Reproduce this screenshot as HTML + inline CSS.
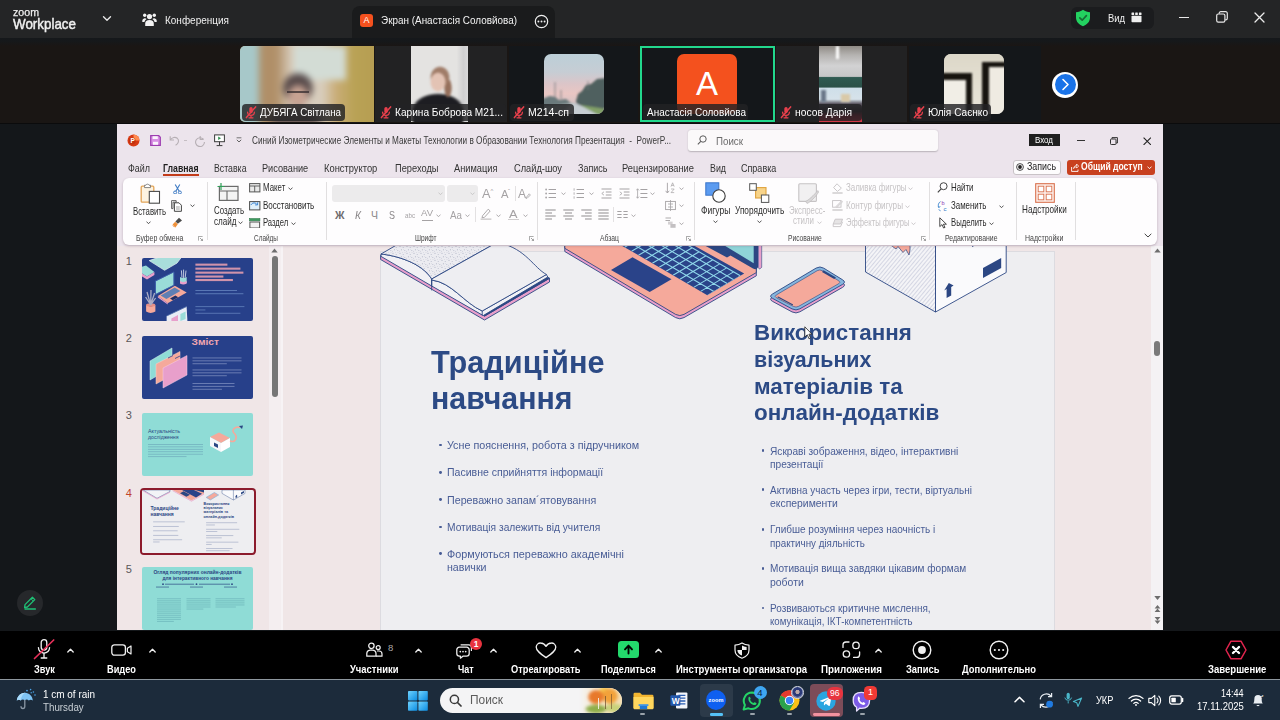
<!DOCTYPE html>
<html lang="ru">
<head>
<meta charset="utf-8">
<title>Zoom</title>
<style>
*{box-sizing:border-box;margin:0;padding:0}
html,body{width:1280px;height:720px;overflow:hidden;background:#14171a;font-family:"Liberation Sans",sans-serif;}
.abs{position:absolute}
.sx{display:inline-block;white-space:nowrap;transform-origin:0 50%}
#root{position:relative;width:1280px;height:720px;overflow:hidden;background:#14171a}
/* ---------- zoom top bar ---------- */
#topbar{left:0;top:0;width:1280px;height:37.5px;background:#242526}
#topbar .t{position:absolute;color:#f0f0f0;white-space:nowrap}
#tab{left:352px;top:6px;width:203px;height:32px;background:#1a1b1c;border-radius:8px 8px 0 0}
/* ---------- video strip ---------- */
#strip{left:0;top:38px;width:1280px;height:86px;background:#1a1614}
#stripband{left:0;top:37.5px;width:1280px;height:8px;background:linear-gradient(#15181b 0,#16181a 45%,#1a1614 100%)}
.tile{position:absolute;top:46px;height:76px;overflow:hidden}
.nm{position:absolute;bottom:1px;height:17px;background:rgba(34,34,36,.82);color:#fff;font-size:11px;line-height:17px;border-radius:4px;white-space:nowrap;padding:0 5px 0 18px}
.nm.nomic{padding-left:4px}
.mic{position:absolute;left:3px;top:2px;width:12px;height:13px}
/* ---------- shared screen ---------- */
#share{left:117px;top:124px;width:1046px;height:506px;background:#f0e4e8;overflow:hidden}
.rt{position:absolute;white-space:nowrap;color:#2b2b2b;font-size:10.5px;line-height:12px}
.rl{position:absolute;white-space:nowrap;color:#444;font-size:8.5px;line-height:10px}
.vs{position:absolute;top:182px;width:1px;height:58px;background:#e1dfe0}
/* ---------- zoom toolbar ---------- */
#zbar{left:0;top:630.5px;width:1280px;height:50px;background:#000}
.zl{position:absolute;top:33px;color:#fff;font-size:11px;font-weight:bold;white-space:nowrap;transform:translateX(-50%);line-height:12px}
/* ---------- taskbar ---------- */
#task{left:0;top:679.3px;width:1280px;height:41px;background:#1c2b3b;border-top:1.2px solid #8e979e}
</style>
</head>
<body>
<div id="root">

<!-- ZOOM TOP BAR -->
<div id="topbar" class="abs">
  <div class="t" style="left:13px;top:7.2px;font-size:10.5px;line-height:10px;-webkit-text-stroke:.25px #f0f0f0"><span class="sx" style="transform:scaleX(1.0122)">zoom</span></div>
  <div class="t" style="left:13px;top:15.8px;font-size:14.5px;line-height:16px;-webkit-text-stroke:.45px #f0f0f0"><span class="sx" style="transform:scaleX(0.9233)">Workplace</span></div>
  <svg class="abs" style="left:102px;top:15px" width="10" height="8" viewBox="0 0 10 8"><path d="M1.5 1.8 L5 5.3 L8.5 1.8" fill="none" stroke="#e8e8e8" stroke-width="1.4" stroke-linecap="round" stroke-linejoin="round"/></svg>
  <svg class="abs" style="left:142px;top:12px" width="15" height="15" viewBox="0 0 15 15"><g fill="#f2f2f2"><circle cx="7.5" cy="4.6" r="2.6"/><circle cx="2.7" cy="3.2" r="1.7"/><circle cx="12.3" cy="3.2" r="1.7"/><path d="M3.2 14 v-2.3 a4.3 3.6 0 0 1 8.6 0 V14 z"/><path d="M0.3 10 v-1.6 a2.5 2.3 0 0 1 4.3 -1.3 a5 5 0 0 0 -2.2 2.9 z"/><path d="M14.7 10 v-1.6 a2.5 2.3 0 0 0 -4.3 -1.3 a5 5 0 0 1 2.2 2.9 z"/></g></svg>
  <div class="t" style="left:165px;top:13px;font-size:11.5px;line-height:14px"><span class="sx" style="transform:scaleX(0.8685)">Конференция</span></div>
  <!-- right cluster -->
  <div class="abs" style="left:1071px;top:7px;width:83px;height:22px;background:#1b1c1e;border-radius:6px"></div>
  <svg class="abs" style="left:1075px;top:9px" width="16" height="18" viewBox="0 0 16 18"><path d="M8 0.8 C5.8 2.4 3.5 3 1 3.2 V8.5 C1 12.6 3.8 15.6 8 17.2 C12.2 15.6 15 12.6 15 8.5 V3.2 C12.5 3 10.2 2.4 8 0.8 z" fill="#23d160"/><path d="M4.8 8.8 L7.2 11.2 L11.4 6.6" fill="none" stroke="#176b35" stroke-width="1.7" stroke-linecap="round" stroke-linejoin="round"/></svg>
  <div class="t" style="left:1108px;top:11px;font-size:11.5px;line-height:14px"><span class="sx" style="transform:scaleX(0.8168)">Вид</span></div>
  <svg class="abs" style="left:1131px;top:12px" width="11" height="11" viewBox="0 0 11 11"><g fill="#efefef"><rect x="0.5" y="0.5" width="2.6" height="2.4" rx=".5"/><rect x="4.2" y="0.5" width="2.6" height="2.4" rx=".5"/><rect x="7.9" y="0.5" width="2.6" height="2.4" rx=".5"/><rect x="0.5" y="3.8" width="10" height="6.4" rx=".8"/></g></svg>
  <div class="abs" style="left:1179px;top:17px;width:10px;height:1.4px;background:#e8e8e8"></div>
  <svg class="abs" style="left:1216px;top:11px" width="12" height="12" viewBox="0 0 12 12"><rect x="0.7" y="3" width="8.2" height="8.2" rx="1.6" fill="none" stroke="#e8e8e8" stroke-width="1.2"/><path d="M3.2 2.8 V2.3 A1.6 1.6 0 0 1 4.8 0.7 H9.6 A1.7 1.7 0 0 1 11.3 2.4 V7.2 A1.6 1.6 0 0 1 9.7 8.8 H9.2" fill="none" stroke="#e8e8e8" stroke-width="1.2"/></svg>
  <svg class="abs" style="left:1254px;top:12px" width="11" height="11" viewBox="0 0 11 11"><path d="M1 1 L10 10 M10 1 L1 10" stroke="#ececec" stroke-width="1.3" stroke-linecap="round"/></svg>
</div>

<!-- VIDEO STRIP -->
<div id="strip" class="abs"></div>
<div id="stripband" class="abs"></div>
<!-- tile 1 -->
<div class="tile" style="left:240px;width:133.5px;border-radius:5px 0 0 5px;background:#b9a274">
  <div class="abs" style="left:-8px;top:-8px;width:160px;height:100px;filter:blur(3.2px);
    background:
     radial-gradient(ellipse 11px 12px at 66px 58px,#c7a292 0 80%,transparent 100%),
     radial-gradient(ellipse 16px 16px at 66px 50px,#574a4a 0 82%,transparent 100%),
     radial-gradient(ellipse 30px 14px at 64px 82px,#6d5d5a 0 70%,transparent 100%),
     linear-gradient(#d3dcd5,#d3dcd5) 62px 8px/52px 34px no-repeat,
     linear-gradient(90deg,#a7c8c9 0 24px,#b08f68 30px 44px,#d8cdbd 60px 90px,#c9ad78 104px,#b9a255 122px,#b39a50 160px)"></div>
  <div class="abs" style="left:47px;top:45px;width:22px;height:2px;background:#3f3435;opacity:.8;filter:blur(.6px)"></div>
  <div class="nm" style="left:2px;width:103px"><svg class="mic" viewBox="0 0 12 13"><g fill="none" stroke="#e8404c" stroke-width="1.25" stroke-linecap="round"><rect x="4.3" y="1" width="3.4" height="6.2" rx="1.7" fill="#e8404c" stroke="none"/><path d="M2.6 6 a3.4 3.4 0 0 0 6.8 0"/><path d="M6 9.6 V11.6 M4 11.8 H8"/><path d="M10.6 0.9 L1.4 11.6" stroke-width="1.5"/></g></svg><span class="sx" style="transform:scaleX(0.8903)">ДУБЯГА Світлана</span></div>
</div>
<!-- tile 2 -->
<div class="tile" style="left:375px;width:132px;background:#222223">
  <div class="abs" style="left:36px;top:0;width:57px;height:76px;background:linear-gradient(90deg,#e4e3e1 0 80%,#cfcfd0 92%,#d9d9da);overflow:hidden">
    <div class="abs" style="left:0;top:0;width:66px;height:84px;filter:blur(1.3px);
      background:
       radial-gradient(ellipse 8px 10px at 27px 36px,#e3c3b4 0 85%,transparent 100%),
       radial-gradient(ellipse 10px 11px at 29px 31px,#a07c68 0 85%,transparent 100%),
       radial-gradient(ellipse 4px 10px at 37px 42px,#96705c 0 80%,transparent 100%),
       radial-gradient(ellipse 26px 16px at 27px 63px,#1d1d22 0 88%,transparent 100%),
       linear-gradient(#1d1d22,#1d1d22) 2px 62px/50px 20px no-repeat"></div>
  </div>
  <div class="nm" style="left:2px;width:129px"><svg class="mic" viewBox="0 0 12 13"><g fill="none" stroke="#e8404c" stroke-width="1.25" stroke-linecap="round"><rect x="4.3" y="1" width="3.4" height="6.2" rx="1.7" fill="#e8404c" stroke="none"/><path d="M2.6 6 a3.4 3.4 0 0 0 6.8 0"/><path d="M6 9.6 V11.6 M4 11.8 H8"/><path d="M10.6 0.9 L1.4 11.6" stroke-width="1.5"/></g></svg><span class="sx" style="transform:scaleX(0.9201)">Карина Боброва М21...</span></div>
</div>
<!-- tile 3 -->
<div class="tile" style="left:509px;width:129px;background:#14171a">
  <svg class="abs" style="left:35px;top:8px;border-radius:7px" width="60" height="60" viewBox="0 0 60 60">
    <defs><linearGradient id="sky" x1="0" y1="0" x2="0" y2="1"><stop offset="0" stop-color="#bccfd8"/><stop offset=".3" stop-color="#c6cdd4"/><stop offset=".5" stop-color="#dcc5c8"/><stop offset=".66" stop-color="#e9c6c3"/><stop offset=".8" stop-color="#d9c3c4"/><stop offset="1" stop-color="#c2c9cf"/></linearGradient><filter id="b3"><feGaussianBlur stdDeviation="1.1"/></filter></defs>
    <rect width="60" height="60" fill="url(#sky)"/>
    <g filter="url(#b3)">
      <path d="M62 24L53 25L47 30L42 31L38 37L34 40L32 47L33 51L62 58z" fill="#50605f"/>
      <path d="M-2 45L6 42L11 43L15 46L22 45L27 49L-2 55z" fill="#6b797b"/>
      <path d="M-2 53L28 49L33 50L58 62H-2z" fill="#9aa6a8"/>
      <path d="M28 49.5L33.5 50L57 62H14z" fill="#c6cdd3"/>
      <path d="M36 51L62 55V62H56z" fill="#82a067"/>
      <path d="M11 28V45M44 27V36M17 36V45" stroke="#6d7478" stroke-width=".8"/>
    </g>
  </svg>
  <div class="nm" style="left:1px;width:64px"><svg class="mic" viewBox="0 0 12 13"><g fill="none" stroke="#e8404c" stroke-width="1.25" stroke-linecap="round"><rect x="4.3" y="1" width="3.4" height="6.2" rx="1.7" fill="#e8404c" stroke="none"/><path d="M2.6 6 a3.4 3.4 0 0 0 6.8 0"/><path d="M6 9.6 V11.6 M4 11.8 H8"/><path d="M10.6 0.9 L1.4 11.6" stroke-width="1.5"/></g></svg><span class="sx" style="transform:scaleX(0.9615)">М214-сп</span></div>
</div>
<!-- tile 4 active -->
<div class="tile" style="left:639.5px;width:135px;background:#14171a;border:2px solid #22d88d">
  <div class="abs" style="left:35.5px;top:6px;width:60px;height:60px;border-radius:7px;background:#f4511e;color:#fff;font-size:33px;line-height:60px;text-align:center">A</div>
  <div class="nm nomic" style="left:1.5px;width:105px;bottom:-1px"><span class="sx" style="transform:scaleX(0.9045)">Анастасія Соловйова</span></div>
</div>
<!-- tile 5 -->
<div class="tile" style="left:776px;width:131px;background:#222223">
  <div class="abs" style="left:42.5px;top:0;width:43px;height:76px;overflow:hidden;background:linear-gradient(#8f8a85 0,#b5b3b1 12%,#d2d2d3 26%,#c6c6c7 40%,#2f5a51 41.5%,#2c5148 54%,#cfdfe9 55.5%,#d6e2ea 70%,#5a5560 76%,#30222b 86%,#a21f33 92%,#d83a4a 100%)">
    <div class="abs" style="left:17px;top:0;width:3px;height:13px;background:#fff;filter:blur(1px)"></div>
    <div class="abs" style="left:22px;top:48px;width:9px;height:8px;background:#d9c9a8;filter:blur(1px)"></div>
    <div class="abs" style="left:2px;top:44px;width:5px;height:12px;background:#6a7788;filter:blur(1px)"></div>
  </div>
  <div class="nm" style="left:1px;width:85px"><svg class="mic" viewBox="0 0 12 13"><g fill="none" stroke="#e8404c" stroke-width="1.25" stroke-linecap="round"><rect x="4.3" y="1" width="3.4" height="6.2" rx="1.7" fill="#e8404c" stroke="none"/><path d="M2.6 6 a3.4 3.4 0 0 0 6.8 0"/><path d="M6 9.6 V11.6 M4 11.8 H8"/><path d="M10.6 0.9 L1.4 11.6" stroke-width="1.5"/></g></svg><span class="sx" style="transform:scaleX(0.9356)">носов Дарія</span></div>
</div>
<!-- tile 6 -->
<div class="tile" style="left:908.5px;width:132px;background:#14171a">
  <div class="abs" style="left:35px;top:8px;width:60px;height:60px;border-radius:7px;overflow:hidden;background:#e6e1d3">
    <div class="abs" style="left:-3px;top:-3px;width:68px;height:68px;filter:blur(1.2px);
      background:
       linear-gradient(#efebe2,#efebe2) 48px 16px/20px 56px no-repeat,
       linear-gradient(#17140f,#17140f) 41px 11px/30px 60px no-repeat,
       linear-gradient(#f1eee6,#f1eee6) 0 29px/25px 40px no-repeat,
       linear-gradient(#17140f,#17140f) 0 22px/31px 50px no-repeat,
       linear-gradient(#dcd7c8,#ebe7db)"></div>
  </div>
  <div class="nm" style="left:1px;width:81px"><svg class="mic" viewBox="0 0 12 13"><g fill="none" stroke="#e8404c" stroke-width="1.25" stroke-linecap="round"><rect x="4.3" y="1" width="3.4" height="6.2" rx="1.7" fill="#e8404c" stroke="none"/><path d="M2.6 6 a3.4 3.4 0 0 0 6.8 0"/><path d="M6 9.6 V11.6 M4 11.8 H8"/><path d="M10.6 0.9 L1.4 11.6" stroke-width="1.5"/></g></svg><span class="sx" style="transform:scaleX(0.9171)">Юлія Саєнко</span></div>
</div>
<!-- next button -->
<div class="abs" style="left:1052px;top:71.5px;width:26px;height:26px;border-radius:50%;background:#fff"></div>
<div class="abs" style="left:1054.5px;top:74px;width:21px;height:21px;border-radius:50%;background:#1a73e8"></div>
<svg class="abs" style="left:1060px;top:78px" width="10" height="13" viewBox="0 0 10 13"><path d="M3 1.5 L8 6.5 L3 11.5" fill="none" stroke="#fff" stroke-width="1.6" stroke-linecap="round" stroke-linejoin="round"/></svg>

<div id="tab" class="abs">
  <div class="abs" style="left:8px;top:8px;width:13px;height:13px;background:#f4511e;border-radius:3px;color:#fff;font-size:9px;line-height:13px;text-align:center">A</div>
  <div class="abs" style="left:29px;top:7px;color:#f2f2f2;font-size:11.5px;line-height:14px;white-space:nowrap"><span class="sx" style="transform:scaleX(0.8623)">Экран (Анастасія Соловйова)</span></div>
  <svg class="abs" style="left:182px;top:7.5px" width="15" height="15" viewBox="0 0 15 15"><circle cx="7.5" cy="7.5" r="6.2" fill="none" stroke="#f0f0f0" stroke-width="1.2"/><circle cx="4.4" cy="7.5" r=".95" fill="#f0f0f0"/><circle cx="7.5" cy="7.5" r=".95" fill="#f0f0f0"/><circle cx="10.6" cy="7.5" r=".95" fill="#f0f0f0"/></svg>
</div>

<div class="abs" id="blk" style="left:0;top:122.7px;width:1280px;height:1.3px;background:#0b0b0c"></div>
<!-- SHARED SCREEN -->
<div id="share" class="abs"><div class="abs" id="pg" style="left:-117px;top:-124px;width:1280px;height:720px">
<!--SLIDE-->
<div class="abs" style="left:117px;top:244px;width:1046px;height:390px;background:#f0e6e7"></div>
<div class="abs" style="left:269px;top:245px;width:12px;height:390px;background:#f4eef0"></div>
<div class="abs" style="left:281px;top:245px;width:2px;height:390px;background:#f7f3f5"></div>
<div class="abs" style="left:271.5px;top:256px;width:6px;height:141px;background:#767676;border-radius:3px"></div>
<svg class="abs" style="left:271px;top:247.5px" width="7" height="5" viewBox="0 0 7 5"><path d="M.3 4.6L3.5 .6L6.7 4.6z" fill="#6d6d6d"/></svg>
<div class="abs" style="left:379.5px;top:251px;width:675.5px;height:390px;background:#eeeef1;border:1px solid #dcdbe0"></div>
<div class="abs" style="left:1151px;top:245px;width:12px;height:390px;background:#f4f2f4"></div>
<svg class="abs" style="left:1153.5px;top:247.5px" width="7" height="5" viewBox="0 0 7 5"><path d="M.3 4.6L3.5 .6L6.7 4.6z" fill="#6d6d6d"/></svg>
<div class="abs" style="left:1154px;top:341px;width:6px;height:15px;background:#7a7a7a;border-radius:3px"></div>
<svg class="abs" style="left:1153.5px;top:595px" width="7" height="30" viewBox="0 0 7 30"><g fill="#6d6d6d"><path d="M.3 1L3.5 5L6.7 1z"/><path d="M.6 13.5L3.5 10L6.4 13.5zM.6 17L3.5 13.6L6.4 17z"/><path d="M.6 22L3.5 25.5L6.4 22zM.6 25.5L3.5 29L6.4 25.5z"/></g></svg>
<svg class="abs" style="left:0;top:0" width="1280" height="720" viewBox="0 0 1280 720"><defs>
<pattern id="stip" width="7" height="7" patternUnits="userSpaceOnUse"><rect width="7" height="7" fill="#ececf1"/><circle cx="1" cy="1.2" r=".55" fill="#a9adbf"/><circle cx="4.2" cy="2.6" r=".5" fill="#b3b7c8"/><circle cx="2.4" cy="4.8" r=".55" fill="#a9adbf"/><circle cx="5.8" cy="5.6" r=".5" fill="#b3b7c8"/><circle cx="6" cy=".6" r=".45" fill="#bcbfce"/><circle cx=".6" cy="6.2" r=".45" fill="#bcbfce"/><circle cx="3.4" cy=".4" r=".4" fill="#c3c6d3"/><circle cx="4.6" cy="4.6" r=".4" fill="#c3c6d3"/></pattern>
<pattern id="hat" width="3" height="3" patternUnits="userSpaceOnUse" patternTransform="rotate(-50)"><rect width="3" height="3" fill="#f4f4f7"/><path d="M0 1.5H3" stroke="#c5c9da" stroke-width=".7"/></pattern>
<clipPath id="kb"><path d="M620.5 245L631.6 251.2L707.3 295.3L744.2 273.5L693 245z"/></clipPath>
<clipPath id="below"><rect x="117" y="245" width="1046" height="400"/></clipPath>
</defs>
<g clip-path="url(#below)">
<path d="M380.6 255.5L484.5 316L549.5 278.3V282L484.5 320L380.6 259.5z" fill="#e89fcb" stroke="#2c4783" stroke-width=".9" stroke-linejoin="round"/>
<path d="M483.6 314.2L547.8 277L549.5 278.3L484.5 316.2z" fill="#2c4783" stroke="#2c4783" stroke-width=".8"/>
<path d="M381 254C395 255.5 421 262 431.7 279V286L381 256.4z" fill="#f1f1f5" stroke="#2c4783" stroke-width=".9" stroke-linejoin="round"/>
<path d="M381 254L400 243H496L431.7 279C421 262 395 255.5 381 254z" fill="url(#stip)" stroke="#2c4783" stroke-width=".9" stroke-linejoin="round"/>
<path d="M431.7 280C452 282.5 464 303 482.2 311L546.3 274.5L547.8 277L483.2 315.6L431.7 286z" fill="#f1f1f5" stroke="#2c4783" stroke-width=".9" stroke-linejoin="round"/>
<path d="M431.7 279L496 243H500C526 249 534 268 546.5 274.5L482.2 311C464 303 452 282.5 431.7 280z" fill="#eeeef2" stroke="#2c4783" stroke-width=".9" stroke-linejoin="round"/>
<path d="M482.2 311V315.4M431.7 279V290.4" stroke="#2c4783" stroke-width=".9"/>
<path d="M564.8 251.5V243H756.3V275.8L684 317.6Q679.8 320 675.6 317.6z" fill="#e89fcb" stroke="#2c4783" stroke-width=".9" stroke-linejoin="round"/>
<path d="M564.8 248.3V240H756.3V272.6L684 314.4Q679.8 316.8 675.6 314.4z" fill="#f5a99b" stroke="#2c4783" stroke-width=".9" stroke-linejoin="round"/>
<path d="M611 270L632.5 257.2L671.5 279.2L649.7 291.9z" fill="#2a4389"/>
<g clip-path="url(#kb)"><rect x="600" y="240" width="160" height="60" fill="#2a4389"/>
<path d="M578.2 212.3L713.9 291.4M584.8 208.4L720.5 287.5M591.4 204.6L727.1 283.6M598.0 200.6L733.7 279.7M604.6 196.8L740.3 275.8M590.2 227.1L623.2 207.6M597.1 231.1L630.1 211.6M604.0 235.1L637.0 215.6M610.9 239.1L643.9 219.6M617.8 243.2L650.8 223.7M624.7 247.2L657.7 227.7M631.6 251.2L664.6 231.7M638.5 255.2L671.5 235.7M645.4 259.2L678.4 239.7M652.3 263.3L685.3 243.8M659.2 267.3L692.2 247.8M666.1 271.3L699.1 251.8M673.0 275.3L706.0 255.8M679.9 279.3L712.9 259.8M686.8 283.4L719.8 263.9M693.7 287.4L726.7 267.9M700.6 291.4L733.6 271.9M707.5 295.4L740.5 275.9" stroke="#8fd6ea" stroke-width="1.1" fill="none"/>
</g>
<path d="M703.8 243V245L727 257.5L730.5 255.5L753 268.6Q758.3 270.6 758.3 265V243z" fill="#2c4783"/>
<path d="M723.6 243V245L753.7 263.2V243z" fill="#8fd4d8"/>
<path d="M758.3 243V267.4Q759.2 270.4 761.7 267.2V243z" fill="#e89fcb" stroke="#2c4783" stroke-width=".6"/>
<path d="M772.6 301.4Q768.6 299.3 772.5 297.0L816.1 271.1Q820.0 268.8 823.8 271.2L842.6 282.8Q846.4 285.2 842.5 287.4L799.9 311.8Q796.0 314.0 792.0 311.9z" fill="#e89fcb" stroke="#2c4783" stroke-width=".9"/>
<path d="M772.6 298.4Q768.6 296.3 772.5 294.0L816.1 268.1Q820.0 265.8 823.8 268.2L842.6 279.8Q846.4 282.2 842.5 284.4L799.9 308.8Q796.0 311.0 792.0 308.9z" fill="#86b6dd" stroke="#2c4783" stroke-width=".9"/>
<path d="M776.5 297.8Q773.8 296.4 776.4 294.9L817.2 270.7Q819.8 269.2 822.4 270.8L838.6 280.7Q841.2 282.3 838.6 283.8L798.7 306.3Q796.1 307.8 793.4 306.4z" fill="#f5a99b" stroke="#2c4783" stroke-width=".6"/>
<path d="M778 297L792.5 304.7" stroke="#2c4783" stroke-width="1.1" stroke-linecap="round"/>
<path d="M823.5 270.3L836 277.6L834.2 279L822 272z" fill="#2c4783"/>
<path d="M865.5 243V272L935.5 312V243z" fill="url(#hat)" stroke="#2c4783" stroke-width=".9" stroke-linejoin="round"/>
<path d="M935.5 243V312L1006.2 272.5V243z" fill="#fafafc" stroke="#2c4783" stroke-width=".9" stroke-linejoin="round"/>
<path d="M983 268L1001.2 258V268L983 278z" fill="#2c4783"/>
<path d="M944.2 290.4L948.8 283L953.6 285.6L951.2 287V295.4L946.6 298V289z" fill="#2c4783"/>
<path d="M892.5 243V246.5L896 249L898 246.5L903 252.5L906 249.5L909 255L910 250V243z" fill="#f5a99b" stroke="#2c4783" stroke-width=".7"/>
<path d="M972 246.5L979 243" stroke="#2c4783" stroke-width="1"/>
</g></svg>
<div class="abs" style="left:430.5px;top:344.5px;font-size:30.6px;line-height:35.19px;color:#2c4a85;white-space:nowrap;font-weight:bold;"><span class="sx" style="transform:scaleX(1.0025)">Традиційне</span></div>
<div class="abs" style="left:430.5px;top:380.6px;font-size:30.6px;line-height:35.19px;color:#2c4a85;white-space:nowrap;font-weight:bold;"><span class="sx" style="transform:scaleX(0.9914)">навчання</span></div>
<div class="abs" style="left:754px;top:319.1px;font-size:22.8px;line-height:26.22px;color:#2c4a85;white-space:nowrap;font-weight:bold;"><span class="sx" style="transform:scaleX(0.9805)">Використання</span></div>
<div class="abs" style="left:754px;top:345.9px;font-size:22.8px;line-height:26.22px;color:#2c4a85;white-space:nowrap;font-weight:bold;"><span class="sx" style="transform:scaleX(0.9381)">візуальних</span></div>
<div class="abs" style="left:754px;top:372.5px;font-size:22.8px;line-height:26.22px;color:#2c4a85;white-space:nowrap;font-weight:bold;"><span class="sx" style="transform:scaleX(0.9852)">матеріалів та</span></div>
<div class="abs" style="left:754px;top:399.0px;font-size:22.8px;line-height:26.22px;color:#2c4a85;white-space:nowrap;font-weight:bold;"><span class="sx" style="transform:scaleX(0.9840)">онлайн-додатків</span></div>
<div class="abs" style="left:447.2px;top:438.8px;font-size:10.6px;line-height:12.19px;color:#485c95;white-space:nowrap;"><span class="sx" style="transform:scaleX(1.0160)">Усне пояснення, робота з підручником</span></div><div class="abs" style="left:438.90000000000003px;top:443.5px;width:2.8px;height:2.8px;border-radius:50%;background:#485c95"></div>
<div class="abs" style="left:447.2px;top:466.3px;font-size:10.6px;line-height:12.19px;color:#485c95;white-space:nowrap;"><span class="sx" style="transform:scaleX(0.9942)">Пасивне сприйняття інформації</span></div><div class="abs" style="left:438.90000000000003px;top:471.0px;width:2.8px;height:2.8px;border-radius:50%;background:#485c95"></div>
<div class="abs" style="left:447.2px;top:493.5px;font-size:10.6px;line-height:12.19px;color:#485c95;white-space:nowrap;"><span class="sx" style="transform:scaleX(1.0112)">Переважно запам´ятовування</span></div><div class="abs" style="left:438.90000000000003px;top:498.2px;width:2.8px;height:2.8px;border-radius:50%;background:#485c95"></div>
<div class="abs" style="left:447.2px;top:520.8px;font-size:10.6px;line-height:12.19px;color:#485c95;white-space:nowrap;"><span class="sx" style="transform:scaleX(0.9645)">Мотивація залежить від учителя</span></div><div class="abs" style="left:438.90000000000003px;top:525.5px;width:2.8px;height:2.8px;border-radius:50%;background:#485c95"></div>
<div class="abs" style="left:447.2px;top:547.7px;font-size:10.6px;line-height:12.19px;color:#485c95;white-space:nowrap;"><span class="sx" style="transform:scaleX(1.0215)">Формуються переважно академічні</span></div><div class="abs" style="left:438.90000000000003px;top:552.4px;width:2.8px;height:2.8px;border-radius:50%;background:#485c95"></div>
<div class="abs" style="left:447.2px;top:561.1px;font-size:10.6px;line-height:12.19px;color:#485c95;white-space:nowrap;"><span class="sx" style="transform:scaleX(1.0036)">навички</span></div>
<div class="abs" style="left:769.6px;top:444.6px;font-size:10.6px;line-height:12.19px;color:#485c95;white-space:nowrap;"><span class="sx" style="transform:scaleX(0.9564)">Яскраві зображення, відео, інтерактивні</span></div><div class="abs" style="left:761.6px;top:449.3px;width:2.8px;height:2.8px;border-radius:50%;background:#485c95"></div>
<div class="abs" style="left:769.6px;top:457.5px;font-size:10.6px;line-height:12.19px;color:#485c95;white-space:nowrap;"><span class="sx" style="transform:scaleX(0.9576)">презентації</span></div>
<div class="abs" style="left:769.6px;top:483.7px;font-size:10.6px;line-height:12.19px;color:#485c95;white-space:nowrap;"><span class="sx" style="transform:scaleX(0.9388)">Активна участь через ігри, тести, віртуальні</span></div><div class="abs" style="left:761.6px;top:488.40000000000003px;width:2.8px;height:2.8px;border-radius:50%;background:#485c95"></div>
<div class="abs" style="left:769.6px;top:497.1px;font-size:10.6px;line-height:12.19px;color:#485c95;white-space:nowrap;"><span class="sx" style="transform:scaleX(0.9814)">експерименти</span></div>
<div class="abs" style="left:769.6px;top:523.3px;font-size:10.6px;line-height:12.19px;color:#485c95;white-space:nowrap;"><span class="sx" style="transform:scaleX(0.9441)">Глибше розуміння через наочність і</span></div><div class="abs" style="left:761.6px;top:528.0px;width:2.8px;height:2.8px;border-radius:50%;background:#485c95"></div>
<div class="abs" style="left:769.6px;top:536.6px;font-size:10.6px;line-height:12.19px;color:#485c95;white-space:nowrap;"><span class="sx" style="transform:scaleX(0.9249)">практичну діяльність</span></div>
<div class="abs" style="left:769.6px;top:562.4px;font-size:10.6px;line-height:12.19px;color:#485c95;white-space:nowrap;"><span class="sx" style="transform:scaleX(0.9498)">Мотивація вища завдяки цікавим формам</span></div><div class="abs" style="left:761.6px;top:567.0999999999999px;width:2.8px;height:2.8px;border-radius:50%;background:#485c95"></div>
<div class="abs" style="left:769.6px;top:575.7px;font-size:10.6px;line-height:12.19px;color:#485c95;white-space:nowrap;"><span class="sx" style="transform:scaleX(0.9860)">роботи</span></div>
<div class="abs" style="left:769.6px;top:602.0px;font-size:10.6px;line-height:12.19px;color:#485c95;white-space:nowrap;"><span class="sx" style="transform:scaleX(0.9413)">Розвиваються критичне мислення,</span></div><div class="abs" style="left:761.6px;top:606.6999999999999px;width:2.8px;height:2.8px;border-radius:50%;background:#485c95"></div>
<div class="abs" style="left:769.6px;top:615.3px;font-size:10.6px;line-height:12.19px;color:#485c95;white-space:nowrap;"><span class="sx" style="transform:scaleX(0.9148)">комунікація, ІКТ-компетентність</span></div>
<svg class="abs" style="left:804px;top:326px" width="9" height="14" viewBox="0 0 9 14"><path d="M.8 .8V11L3.3 8.8L5 12.8L6.6 12.1L4.9 8.2H8z" fill="#fff" stroke="#222" stroke-width=".8" stroke-linejoin="round"/></svg>
<!--/SLIDE-->
<!--THUMBS-->
<div class="abs" style="left:125.8px;top:254.9px;font-size:11px;line-height:12px;color:#5a5658">1</div>
<svg class="abs" style="left:142px;top:258.3px;border-radius:2px;" width="111" height="63" viewBox="0 0 111 63"><rect width="111" height="63" fill="#27408a"/><path d="M7.2 2.6L17.5 -1H39.6L35 5.1L22.6 12.3z" fill="#a9dedb" stroke="#e9f7f6" stroke-width=".7"/><path d="M0 8.7L4 7.5L12.4 14L5 18.5L0 15.5z" fill="#9adcd8"/><path d="M0 15.5L5 18.5L12.4 14V17L5 21.5L0 18.5z" fill="#e89fcb"/><path d="M13.4 23.1L31.9 13.9V27.2L13.4 36.5z" fill="#9adcd8" stroke="#3a5aa8" stroke-width="1"/><path d="M15.9 38L32.9 27.8L44.7 34.4L25.7 45.2z" fill="#f5a99b"/><path d="M18.6 37.6L32.6 29.6L38.4 33L24.4 41z" fill="#5f7fb4"/><path d="M28 40.6L33.4 37.6L36.2 39.2L30.8 42.2z" fill="#1f2f66"/><path d="M15.9 38L25.7 45.2V46.6L15.9 39.4z" fill="#e89fcb"/><path d="M38 19V25Q41.3 27 44.7 25V19Q41.3 21 38 19z" fill="#9adcd8"/><path d="M38 23Q41.3 25 44.7 23V25.4Q41.3 27.4 38 25.4z" fill="#e89fcb"/><path d="M40 19.6L39.4 12.4M41.6 20V11.6M43.2 19.6L44 12.6" stroke="#cfd6e6" stroke-width=".9"/><path d="M4.1 47V53.6Q8.7 56.4 13.4 53.6V47Q8.7 49.8 4.1 47z" fill="#f5a99b"/><ellipse cx="8.7" cy="47" rx="4.6" ry="1.7" fill="#e58f86"/><path d="M8.7 47L5 34M8.7 47L9 32M8.7 47L12.6 35M8.7 47L3.6 39M8.7 47L13.6 40" stroke="#a9abc4" stroke-width="1.3" fill="none"/><path d="M24.6 58L44.6 48.6L45.4 63H24.6z" fill="#e8ecf6"/><path d="M29.4 60.4L36 57V63H29.4z" fill="#e89fcb"/><path d="M38.4 56L43.6 53.4V61L38.4 63z" fill="#9adcd8"/><path d="M24.6 58L44.6 48.6" stroke="#4a6aa8" stroke-width=".8"/><rect x="53.4" y="5.6" width="32" height="2.1" fill="#f5a6b2" opacity=".82"/><rect x="53.4" y="9.6" width="45" height="2.1" fill="#f5a6b2" opacity=".82"/><rect x="53.4" y="13.6" width="48" height="2.1" fill="#f5a6b2" opacity=".82"/><rect x="53.4" y="17.5" width="28" height="2.1" fill="#f5a6b2" opacity=".82"/><rect x="53.4" y="21" width="37.5" height="2.1" fill="#f5a6b2" opacity=".82"/><rect x="53.4" y="32" width="41.6" height=".9" fill="#86a8da" opacity=".6"/><rect x="53.4" y="35.3" width="48" height=".9" fill="#86a8da" opacity=".6"/><rect x="53.4" y="48.2" width="49" height=".9" fill="#86a8da" opacity=".55"/><rect x="53.4" y="51.5" width="10" height=".9" fill="#86a8da" opacity=".55"/><rect x="53.4" y="54.8" width="45" height=".9" fill="#86a8da" opacity=".55"/></svg>
<div class="abs" style="left:125.8px;top:332.4px;font-size:11px;line-height:12px;color:#5a5658">2</div>
<svg class="abs" style="left:142px;top:335.8px;border-radius:2px;" width="111" height="63" viewBox="0 0 111 63"><rect width="111" height="63" fill="#27408a"/><text x="49.5" y="9.4" font-family="Liberation Sans" font-weight="bold" font-size="9.4" fill="#f3a7b0" textLength="27.5" lengthAdjust="spacingAndGlyphs">Зміст</text><path d="M8 25L30 12V31L8 44z" fill="#8fdcd6" stroke="#d9f3f1" stroke-width=".5"/><path d="M14 28L38 15.5V35L14 48z" fill="#f5a99b" stroke="#fbd2cb" stroke-width=".5"/><path d="M21 32L45 19.5V39L21 52z" fill="#e89fcb" stroke="#f6cfe6" stroke-width=".5"/><path d="M33 22.5L38 20" stroke="#27408a" stroke-width=".8"/><path d="M26 22L31 19.5" stroke="#27408a" stroke-width=".8"/><rect x="50.5" y="21.50" width="49.0" height="0.9" fill="#b9c6e6" opacity="0.5"/><rect x="50.5" y="24.40" width="49.0" height="0.9" fill="#b9c6e6" opacity="0.5"/><rect x="50.5" y="27.30" width="34.3" height="0.9" fill="#b9c6e6" opacity="0.5"/><rect x="50.5" y="33.50" width="49.0" height="0.9" fill="#b9c6e6" opacity="0.5"/><rect x="50.5" y="36.40" width="49.0" height="0.9" fill="#b9c6e6" opacity="0.5"/><rect x="50.5" y="39.30" width="34.3" height="0.9" fill="#b9c6e6" opacity="0.5"/><rect x="50.5" y="47.00" width="42.0" height="0.9" fill="#b9c6e6" opacity="0.5"/><rect x="50.5" y="49.90" width="42.0" height="0.9" fill="#b9c6e6" opacity="0.5"/><rect x="50.5" y="52.80" width="29.4" height="0.9" fill="#b9c6e6" opacity="0.5"/></svg>
<div class="abs" style="left:125.8px;top:409.4px;font-size:11px;line-height:12px;color:#5a5658">3</div>
<svg class="abs" style="left:142px;top:412.9px;border-radius:2px;" width="111" height="63" viewBox="0 0 111 63"><rect width="111" height="63" fill="#8fdcd6"/><text x="6" y="19.6" font-family="Liberation Sans" font-size="5.4" fill="#2c4783" textLength="32" lengthAdjust="spacingAndGlyphs">Актуальність</text><text x="6" y="26.2" font-family="Liberation Sans" font-size="5.4" fill="#2c4783" textLength="30.5" lengthAdjust="spacingAndGlyphs">дослідження</text><rect x="6" y="31.00" width="55.0" height="0.8" fill="#4d78a0" opacity="0.42"/><rect x="6" y="33.45" width="55.0" height="0.8" fill="#4d78a0" opacity="0.42"/><rect x="6" y="35.90" width="55.0" height="0.8" fill="#4d78a0" opacity="0.42"/><rect x="6" y="38.35" width="55.0" height="0.8" fill="#4d78a0" opacity="0.42"/><rect x="6" y="40.80" width="55.0" height="0.8" fill="#4d78a0" opacity="0.42"/><rect x="6" y="43.25" width="38.5" height="0.8" fill="#4d78a0" opacity="0.42"/><path d="M68 24L77 19.5L88 25L79 30z" fill="#f5a99b"/><path d="M68 24V33L79 39V30z" fill="#f7f7fa"/><path d="M79 30L88 25V34L79 39z" fill="#fff"/><path d="M72 29.5L76 31.5V35L72 33z" fill="#2c4783"/><path d="M88 28C94 30 96 24 92 20C89 17 93 13 98 14.5" fill="none" stroke="#f5a99b" stroke-width="1.6"/><path d="M97 13L101 12.5L100 16z" fill="#2c4783"/></svg>
<div class="abs" style="left:125.8px;top:486.9px;font-size:11px;line-height:12px;color:#c1432b">4</div>
<div class="abs" style="left:139.5px;top:488.3px;width:116px;height:67px;border:2px solid #8c1b2c;border-radius:4px;background:#eeeef1"></div>
<svg class="abs" style="left:142px;top:490.4px;border-radius:2px;" width="111" height="63" viewBox="0 0 111 63"><rect width="111" height="63" fill="#eeeef1"/><path d="M1 0L15 8.3L28 1.5V0z" fill="#f3f3f7" stroke="#2c4783" stroke-width=".45"/><path d="M1 .8L15 9L28 2.2" fill="none" stroke="#e89fcb" stroke-width=".8"/><path d="M30.5 0L49.5 10.5L62 3.5V0z" fill="#f5a99b"/><path d="M30.5 .6L49.5 11.2L62 4.2" fill="none" stroke="#e89fcb" stroke-width=".7"/><path d="M38 3.2L41.6 1.2L48 4.8L44.4 6.8z" fill="#2c4783"/><path d="M40 0L54 7.4L60 3.8L52 0z" fill="#2a4389"/><path d="M53 0L62 2.5V0z" fill="#2c4783"/><path d="M64.2 7.4L72.4 2.5L76.6 5L68.4 9.9z" fill="#f5a99b" stroke="#86b6dd" stroke-width=".7"/><path d="M80 0V3.4L91.4 10L103 3.4V0z" fill="#fafafc" stroke="#2c4783" stroke-width=".4"/><path d="M91.4 0V10" stroke="#2c4783" stroke-width=".4"/><path d="M99 2.6L102 1V2.8L99 4.4z" fill="#2c4783"/><path d="M93.4 6.4L94.4 4.8L95.2 5.4V7.2L93.8 8z" fill="#2c4783"/><text x="8.4" y="19.8" font-family="Liberation Sans" font-weight="bold" font-size="4.9" fill="#2c4783" textLength="28.5" lengthAdjust="spacingAndGlyphs">Традиційне</text><text x="8.4" y="25.7" font-family="Liberation Sans" font-weight="bold" font-size="4.9" fill="#2c4783" textLength="23.2" lengthAdjust="spacingAndGlyphs">навчання</text><text x="61.5" y="14.60" font-family="Liberation Sans" font-weight="bold" font-size="3.6" fill="#2c4783" textLength="26" lengthAdjust="spacingAndGlyphs">Використання</text><text x="61.5" y="18.97" font-family="Liberation Sans" font-weight="bold" font-size="3.6" fill="#2c4783" textLength="19.3" lengthAdjust="spacingAndGlyphs">візуальних</text><text x="61.5" y="23.34" font-family="Liberation Sans" font-weight="bold" font-size="3.6" fill="#2c4783" textLength="24.5" lengthAdjust="spacingAndGlyphs">матеріалів та</text><text x="61.5" y="27.71" font-family="Liberation Sans" font-weight="bold" font-size="3.6" fill="#2c4783" textLength="30.5" lengthAdjust="spacingAndGlyphs">онлайн-додатків</text><rect x="11.1" y="31.50" width="31.6" height=".75" fill="#41588f" opacity=".38"/><rect x="11.1" y="35.98" width="25.7" height=".75" fill="#41588f" opacity=".38"/><rect x="11.1" y="40.46" width="24.5" height=".75" fill="#41588f" opacity=".38"/><rect x="11.1" y="44.94" width="25.2" height=".75" fill="#41588f" opacity=".38"/><rect x="11.1" y="49.42" width="29" height=".75" fill="#41588f" opacity=".38"/><rect x="11.1" y="51.6" width="6.5" height=".75" fill="#41588f" opacity=".38"/><rect x="64.1" y="32.40" width="31" height=".75" fill="#41588f" opacity=".38"/><rect x="64.1" y="34.60" width="8.8" height=".75" fill="#41588f" opacity=".38"/><rect x="64.1" y="38.85" width="33.2" height=".75" fill="#41588f" opacity=".38"/><rect x="64.1" y="41.05" width="11.2" height=".75" fill="#41588f" opacity=".38"/><rect x="64.1" y="45.30" width="27.2" height=".75" fill="#41588f" opacity=".38"/><rect x="64.1" y="47.50" width="15.6" height=".75" fill="#41588f" opacity=".38"/><rect x="64.1" y="51.75" width="32.3" height=".75" fill="#41588f" opacity=".38"/><rect x="64.1" y="53.95" width="5.6" height=".75" fill="#41588f" opacity=".38"/><rect x="64.1" y="58.20" width="26.4" height=".75" fill="#41588f" opacity=".38"/><rect x="64.1" y="60.40" width="23.5" height=".75" fill="#41588f" opacity=".38"/></svg>
<div class="abs" style="left:125.8px;top:563.4px;font-size:11px;line-height:12px;color:#5a5658">5</div>
<svg class="abs" style="left:142px;top:567.2px;border-radius:2px;" width="111" height="63" viewBox="0 0 111 63"><rect width="111" height="63" fill="#8fdcd6"/><text x="11.5" y="6.8" font-family="Liberation Sans" font-weight="bold" font-size="5.7" fill="#2c4783" textLength="88" lengthAdjust="spacingAndGlyphs">Огляд популярних онлайн-додатків</text><text x="20.5" y="13.4" font-family="Liberation Sans" font-weight="bold" font-size="5.7" fill="#2c4783" textLength="70" lengthAdjust="spacingAndGlyphs">для інтерактивного навчання</text><path d="M23 17.2H52M57 17.2H88" stroke="#2c4783" stroke-width=".7"/><circle cx="21" cy="17.2" r=".9" fill="#2c4783"/><circle cx="54.5" cy="17.2" r=".9" fill="#2c4783"/><circle cx="90" cy="17.2" r=".9" fill="#2c4783"/><rect x="14" y="19.6" width="13" height=".9" fill="#2c4783" opacity=".7"/><rect x="48" y="19.6" width="13" height=".9" fill="#2c4783" opacity=".7"/><rect x="82" y="19.6" width="13" height=".9" fill="#2c4783" opacity=".7"/><rect x="15" y="31.40" width="24.0" height="0.8" fill="#2f6f86" opacity="0.32"/><rect x="15" y="33.45" width="24.0" height="0.8" fill="#2f6f86" opacity="0.32"/><rect x="15" y="35.50" width="24.0" height="0.8" fill="#2f6f86" opacity="0.32"/><rect x="15" y="37.55" width="24.0" height="0.8" fill="#2f6f86" opacity="0.32"/><rect x="15" y="39.60" width="24.0" height="0.8" fill="#2f6f86" opacity="0.32"/><rect x="15" y="41.65" width="24.0" height="0.8" fill="#2f6f86" opacity="0.32"/><rect x="15" y="43.70" width="24.0" height="0.8" fill="#2f6f86" opacity="0.32"/><rect x="15" y="45.75" width="24.0" height="0.8" fill="#2f6f86" opacity="0.32"/><rect x="15" y="47.80" width="24.0" height="0.8" fill="#2f6f86" opacity="0.32"/><rect x="15" y="49.85" width="24.0" height="0.8" fill="#2f6f86" opacity="0.32"/><rect x="15" y="51.90" width="24.0" height="0.8" fill="#2f6f86" opacity="0.32"/><rect x="15" y="53.95" width="16.8" height="0.8" fill="#2f6f86" opacity="0.32"/><rect x="44.5" y="31.40" width="24.0" height="0.8" fill="#2f6f86" opacity="0.32"/><rect x="44.5" y="33.45" width="24.0" height="0.8" fill="#2f6f86" opacity="0.32"/><rect x="44.5" y="35.50" width="24.0" height="0.8" fill="#2f6f86" opacity="0.32"/><rect x="44.5" y="37.55" width="24.0" height="0.8" fill="#2f6f86" opacity="0.32"/><rect x="44.5" y="39.60" width="24.0" height="0.8" fill="#2f6f86" opacity="0.32"/><rect x="44.5" y="41.65" width="16.8" height="0.8" fill="#2f6f86" opacity="0.32"/><rect x="73.5" y="31.40" width="29.0" height="0.8" fill="#2f6f86" opacity="0.32"/><rect x="73.5" y="33.45" width="29.0" height="0.8" fill="#2f6f86" opacity="0.32"/><rect x="73.5" y="35.50" width="29.0" height="0.8" fill="#2f6f86" opacity="0.32"/><rect x="73.5" y="37.55" width="29.0" height="0.8" fill="#2f6f86" opacity="0.32"/><rect x="73.5" y="39.60" width="20.3" height="0.8" fill="#2f6f86" opacity="0.32"/></svg>
<!--/THUMBS-->
<!--PPT-->
<div class="abs" style="left:117px;top:124px;width:1046px;height:122px;background:#ece4ec"></div>
<svg class="abs" style="left:127.2px;top:133.8px" width="13" height="13" viewBox="0 0 13 13"><circle cx="6.5" cy="6.5" r="6" fill="#d83b14"/><path d="M6.5 .5 A6 6 0 0 1 12.5 6.5 H6.5z" fill="#ff8a50"/><circle cx="5.2" cy="7" r="3.4" fill="#c2310f"/><text x="3.6" y="9.3" font-size="6.5" font-weight="bold" fill="#fff" font-family="Liberation Sans">P</text></svg>
<svg class="abs" style="left:150px;top:134.8px" width="11" height="11" viewBox="0 0 11 11"><path d="M.7 .7H8.8L10.3 2.2V10.3H.7z" fill="#d88fe4" stroke="#9c3db0" stroke-width="1.2"/><rect x="2.6" y="1.2" width="5.2" height="2.8" fill="#fbf3fc"/><rect x="3" y="6.8" width="5" height="3" fill="#fbf3fc"/></svg>
<svg class="abs" style="left:169px;top:135px" width="11" height="11" viewBox="0 0 11 11"><path d="M1.2 1.2V5H5" fill="none" stroke="#b6afb4" stroke-width="1.1"/><path d="M1.4 4.8C3 2.3 6.2 1.6 8.3 3.3C10.5 5.2 9.6 8.4 6.6 10.2" fill="none" stroke="#b6afb4" stroke-width="1.1"/></svg>
<div class="abs" style="left:184px;top:140px;width:3px;height:1px;background:#c5bec3"></div>
<svg class="abs" style="left:194px;top:134.5px" width="12" height="12" viewBox="0 0 12 12"><path d="M7.4 1V4.4H10.8" fill="none" stroke="#b6afb4" stroke-width="1.1" transform="translate(-1.2,0)"/><path d="M9.3 4.2A4.4 4.4 0 1 0 10.4 7" fill="none" stroke="#b6afb4" stroke-width="1.1"/></svg>
<svg class="abs" style="left:214px;top:134px" width="11" height="13" viewBox="0 0 11 13"><rect x=".6" y=".9" width="9.8" height="6.8" fill="#fff" stroke="#3b3b3b" stroke-width="1"/><path d="M5.5 7.7V11.2M2.6 11.6H8.4" stroke="#3b3b3b" stroke-width="1"/><path d="M4.2 2.6L7 4.3L4.2 6z" fill="#2f8f4e"/></svg>
<svg class="abs" style="left:235.5px;top:136.5px" width="6" height="6" viewBox="0 0 6 6"><path d="M.6 .8H5.4" stroke="#555" stroke-width=".8"/><path d="M.8 2.8L3 5L5.2 2.8" fill="none" stroke="#555" stroke-width=".9"/></svg>
<div class="rt" style="left:251.5px;top:134.5px;font-size:10.2px;color:#3a3a3a;"><span class="sx" style="transform:scaleX(0.8063)">Синий Изометрические Элементы и Макеты Технологии в Образовании Технология Презентация&nbsp; -&nbsp; PowerP...</span></div>
<div class="abs" style="left:688px;top:130px;width:250px;height:21px;background:#fbf9fa;border-radius:3px;box-shadow:0 .5px 1.5px rgba(0,0,0,.22)"></div>
<svg class="abs" style="left:697px;top:135px" width="10" height="10" viewBox="0 0 10 10"><circle cx="6" cy="4" r="3.2" fill="none" stroke="#5a5a5a" stroke-width="1"/><path d="M3.8 6.3L.8 9.3" stroke="#5a5a5a" stroke-width="1.1"/></svg>
<div class="rt" style="left:716px;top:134.5px;font-size:10.8px;color:#6b6b6b;"><span class="sx" style="transform:scaleX(0.9023)">Поиск</span></div>
<div class="abs" style="left:1028.5px;top:134px;width:31px;height:12px;background:#1f1f1f"></div>
<div class="rt" style="left:1035px;top:134px;font-size:8.6px;color:#fff;"><span class="sx" style="transform:scaleX(0.9253)">Вход</span></div>
<div class="abs" style="left:1077px;top:139.5px;width:8px;height:1px;background:#333"></div>
<svg class="abs" style="left:1110px;top:136.5px" width="8" height="8" viewBox="0 0 8 8"><rect x=".5" y="2" width="5.5" height="5.5" fill="none" stroke="#333" stroke-width="1" rx=".8"/><path d="M2 1.8V.6H7.4V6H6.2" fill="none" stroke="#333" stroke-width="1"/></svg>
<svg class="abs" style="left:1142.5px;top:136.5px" width="8.5" height="8.5" viewBox="0 0 8.5 8.5"><path d="M.6 .6L7.9 7.9M7.9 .6L.6 7.9" stroke="#222" stroke-width="1.1"/></svg>
<div class="rt" style="left:127.5px;top:161.5px;font-size:10.8px;color:#333;"><span class="sx" style="transform:scaleX(0.8287)">Файл</span></div>
<div class="rt" style="left:163.2px;top:161.5px;font-size:10.8px;color:#1f1f1f;font-weight:bold;"><span class="sx" style="transform:scaleX(0.8083)">Главная</span></div>
<div class="rt" style="left:213.7px;top:161.5px;font-size:10.8px;color:#333;"><span class="sx" style="transform:scaleX(0.8097)">Вставка</span></div>
<div class="rt" style="left:261.5px;top:161.5px;font-size:10.8px;color:#333;"><span class="sx" style="transform:scaleX(0.8497)">Рисование</span></div>
<div class="rt" style="left:323.7px;top:161.5px;font-size:10.8px;color:#333;"><span class="sx" style="transform:scaleX(0.8658)">Конструктор</span></div>
<div class="rt" style="left:394.5px;top:161.5px;font-size:10.8px;color:#333;"><span class="sx" style="transform:scaleX(0.8587)">Переходы</span></div>
<div class="rt" style="left:453.5px;top:161.5px;font-size:10.8px;color:#333;"><span class="sx" style="transform:scaleX(0.8582)">Анимация</span></div>
<div class="rt" style="left:514px;top:161.5px;font-size:10.8px;color:#333;"><span class="sx" style="transform:scaleX(0.8574)">Слайд-шоу</span></div>
<div class="rt" style="left:577.5px;top:161.5px;font-size:10.8px;color:#333;"><span class="sx" style="transform:scaleX(0.8325)">Запись</span></div>
<div class="rt" style="left:622px;top:161.5px;font-size:10.8px;color:#333;"><span class="sx" style="transform:scaleX(0.8636)">Рецензирование</span></div>
<div class="rt" style="left:709.5px;top:161.5px;font-size:10.8px;color:#333;"><span class="sx" style="transform:scaleX(0.8185)">Вид</span></div>
<div class="rt" style="left:740.7px;top:161.5px;font-size:10.8px;color:#333;"><span class="sx" style="transform:scaleX(0.8333)">Справка</span></div>
<div class="abs" style="left:163px;top:174px;width:36px;height:1.6px;background:#c23b1a"></div>
<div class="abs" style="left:1013px;top:159.5px;width:48px;height:15px;background:#fdfcfd;border:1px solid #c9c3c7;border-radius:3px"></div>
<svg class="abs" style="left:1015.6px;top:163px" width="8" height="8" viewBox="0 0 8 8"><circle cx="4" cy="4" r="3.4" fill="none" stroke="#222" stroke-width=".8"/><circle cx="4" cy="4" r="1.9" fill="#222"/></svg>
<div class="rt" style="left:1026.8px;top:161px;font-size:10.3px;color:#222;"><span class="sx" style="transform:scaleX(0.8581)">Запись</span></div>
<div class="abs" style="left:1067px;top:159.5px;width:88px;height:15px;background:#c8401f;border-radius:3px"></div>
<svg class="abs" style="left:1070.5px;top:162.5px" width="8" height="9" viewBox="0 0 8 9"><path d="M.6 4V8.4H7V6.5" fill="none" stroke="#fff" stroke-width=".9"/><path d="M2.6 5.6C2.8 3.6 4 2.6 5.6 2.6V1L7.6 3.1L5.6 5.1V3.8C4.4 3.8 3.4 4.3 2.6 5.6z" fill="none" stroke="#fff" stroke-width=".8"/></svg>
<div class="rt" style="left:1080.7px;top:161px;font-size:10.3px;color:#fff;font-weight:bold;"><span class="sx" style="transform:scaleX(0.8310)">Общий доступ</span></div>
<svg class="abs" style="left:1147.0px;top:165.5px" width="5" height="3.5" viewBox="0 0 5 3.5"><path d="M.5 .6 L2.5 2.7 L4.5 .6" fill="none" stroke="#fff" stroke-width=".9"/></svg>
<div class="abs" style="left:123px;top:177.5px;width:1034px;height:67px;background:#fefdfe;border-radius:6px;box-shadow:0 1px 2.5px rgba(60,30,50,.28)"></div>
<div class="vs" style="left:206.5px"></div>
<div class="vs" style="left:326px"></div>
<div class="vs" style="left:536.5px"></div>
<div class="vs" style="left:693.5px"></div>
<div class="vs" style="left:928.5px"></div>
<div class="vs" style="left:1015.5px"></div>
<div class="vs" style="left:1074.5px"></div>
<svg class="abs" style="left:140px;top:182.5px" width="21" height="21" viewBox="0 0 21 21"><rect x="1.2" y="3.2" width="12.6" height="16" fill="#fdf3e1" stroke="#e2a458" stroke-width="1.3" rx="1"/><path d="M4.5 3.4V2.2H6A1.6 1.6 0 0 1 9 2.2H10.5V4.6H4.5z" fill="#fff" stroke="#777" stroke-width=".9"/><rect x="9.3" y="8.4" width="10.2" height="11.8" fill="#fff" stroke="#4a4a4a" stroke-width="1.1"/></svg>
<div class="rt" style="left:132.7px;top:205.7px;font-size:10.3px;color:#2b2b2b;"><span class="sx" style="transform:scaleX(0.7559)">Вставить</span></div>
<svg class="abs" style="left:146.0px;top:220.5px" width="5" height="3.5" viewBox="0 0 5 3.5"><path d="M.5 .6 L2.5 2.7 L4.5 .6" fill="none" stroke="#444" stroke-width=".9"/></svg>
<svg class="abs" style="left:172.5px;top:183.5px" width="9" height="10.5" viewBox="0 0 9 10.5"><path d="M2.2 .5L6.2 7.2M6.8 .5L2.8 7.2" stroke="#3f7bc4" stroke-width="1.1"/><circle cx="2.1" cy="8.5" r="1.5" fill="none" stroke="#3f7bc4" stroke-width="1"/><circle cx="6.9" cy="8.5" r="1.5" fill="none" stroke="#3f7bc4" stroke-width="1"/></svg>
<svg class="abs" style="left:171px;top:199.5px" width="12" height="12" viewBox="0 0 12 12"><path d="M.6 .6H5.2V2.2H2V8.6H.6z" fill="#fff" stroke="#555" stroke-width=".9"/><path d="M3.4 2.8H8L10.4 5.2V11.3H3.4z" fill="#fff" stroke="#444" stroke-width="1"/><path d="M5 7H8.8M5 9H8.8" stroke="#777" stroke-width=".7"/></svg>
<svg class="abs" style="left:190.0px;top:204.0px" width="5" height="3.5" viewBox="0 0 5 3.5"><path d="M.5 .6 L2.5 2.7 L4.5 .6" fill="none" stroke="#444" stroke-width=".9"/></svg>
<svg class="abs" style="left:171.5px;top:217px" width="11" height="11" viewBox="0 0 11 11"><path d="M7 .8L10 3.6L5.8 6.8L3.4 4.6z" fill="#4a4a4a"/><path d="M3.2 4.8L5.8 7.2L3.4 10.4L.6 7.6z" fill="#f0913a"/><path d="M.8 8.4L2.6 10.2" stroke="#d9772a" stroke-width=".8"/></svg>
<div class="rl" style="left:136px;top:233px"><span class="sx" style="transform:scaleX(0.8223)">Буфер обмена</span></div>
<svg class="abs" style="left:198px;top:236px" width="5" height="5" viewBox="0 0 5 5"><path d="M.4 4.6V.4H4.6" fill="none" stroke="#8a8a8a" stroke-width=".8"/><path d="M2 2 L4.6 4.6 M4.6 2.8V4.6H2.8" fill="none" stroke="#8a8a8a" stroke-width=".8"/></svg>
<svg class="abs" style="left:216.5px;top:182.5px" width="22" height="18.5" viewBox="0 0 22 18.5"><rect x="2.4" y="3.4" width="18.6" height="14" fill="#f4f4f4" stroke="#6b6b6b" stroke-width="1.2"/><path d="M2.4 8H21M10 8V17.4" stroke="#6b6b6b" stroke-width="1.1"/><path d="M4 0V7M.5 3.5H7.5" stroke="#2f9e57" stroke-width="1.2"/></svg>
<div class="rt" style="left:213.7px;top:204.5px;font-size:10.3px;color:#2b2b2b;"><span class="sx" style="transform:scaleX(0.7665)">Создать</span></div>
<div class="rt" style="left:214px;top:216px;font-size:10.3px;color:#2b2b2b;"><span class="sx" style="transform:scaleX(0.7852)">слайд</span></div>
<svg class="abs" style="left:237.5px;top:220.5px" width="5" height="3.5" viewBox="0 0 5 3.5"><path d="M.5 .6 L2.5 2.7 L4.5 .6" fill="none" stroke="#444" stroke-width=".9"/></svg>
<svg class="abs" style="left:249px;top:183px" width="11.5" height="9.5" viewBox="0 0 11.5 9.5"><rect x=".6" y=".6" width="10.3" height="8.3" fill="#e9e9e9" stroke="#555" stroke-width="1"/><path d="M.6 3H10.9M5.7 3V8.9" stroke="#555" stroke-width=".9"/></svg>
<div class="rt" style="left:262.7px;top:181.5px;font-size:10.3px;color:#2b2b2b;"><span class="sx" style="transform:scaleX(0.7648)">Макет</span></div>
<svg class="abs" style="left:288.0px;top:186.5px" width="5" height="3.5" viewBox="0 0 5 3.5"><path d="M.5 .6 L2.5 2.7 L4.5 .6" fill="none" stroke="#444" stroke-width=".9"/></svg>
<svg class="abs" style="left:249px;top:200px" width="11.5" height="10.5" viewBox="0 0 11.5 10.5"><rect x=".6" y="1.6" width="10.3" height="8.3" fill="#dff0fb" stroke="#4b4b4b" stroke-width="1"/><path d="M2 4.8C3.5 2.4 6.5 2.4 8 4.4" fill="none" stroke="#2d7dd2" stroke-width="1"/><path d="M8.6 2.4V4.9H6.1" fill="none" stroke="#2d7dd2" stroke-width=".9"/></svg>
<div class="rt" style="left:262.7px;top:199.7px;font-size:10.3px;color:#2b2b2b;"><span class="sx" style="transform:scaleX(0.7780)">Восстановить</span></div>
<svg class="abs" style="left:249px;top:217.5px" width="11.5" height="10.5" viewBox="0 0 11.5 10.5"><rect x=".6" y=".6" width="10.3" height="2.2" fill="#3d9a5f" stroke="#2f7a4a" stroke-width=".6"/><rect x=".9" y="4" width="9.7" height="6" fill="#f2f2f2" stroke="#555" stroke-width="1"/></svg>
<div class="rt" style="left:262.7px;top:216.5px;font-size:10.3px;color:#2b2b2b;"><span class="sx" style="transform:scaleX(0.7431)">Раздел</span></div>
<svg class="abs" style="left:291.0px;top:221.5px" width="5" height="3.5" viewBox="0 0 5 3.5"><path d="M.5 .6 L2.5 2.7 L4.5 .6" fill="none" stroke="#444" stroke-width=".9"/></svg>
<div class="rl" style="left:253.7px;top:233px"><span class="sx" style="transform:scaleX(0.7581)">Слайды</span></div>
<div class="abs" style="left:332px;top:185px;width:113px;height:16.5px;background:#ecebec;border-radius:3px"></div>
<div class="abs" style="left:447px;top:185px;width:30.5px;height:16.5px;background:#ecebec;border-radius:3px"></div>
<svg class="abs" style="left:437.5px;top:192.0px" width="5" height="3.5" viewBox="0 0 5 3.5"><path d="M.5 .6 L2.5 2.7 L4.5 .6" fill="none" stroke="#c4c4c4" stroke-width=".9"/></svg>
<svg class="abs" style="left:470.0px;top:192.0px" width="5" height="3.5" viewBox="0 0 5 3.5"><path d="M.5 .6 L2.5 2.7 L4.5 .6" fill="none" stroke="#c4c4c4" stroke-width=".9"/></svg>
<div class="rt" style="left:482px;top:187.5px;font-size:12.5px;color:#a5a2a4;"><span class="sx" style="transform:scaleX(1.0187)">A</span></div>
<div class="abs" style="left:490.5px;top:188px;color:#a5a2a4;font-size:6px;line-height:6px">^</div>
<div class="rt" style="left:500.7px;top:188px;font-size:11px;color:#a5a2a4;"><span class="sx" style="transform:scaleX(1.0213)">A</span></div>
<div class="abs" style="left:508px;top:188px;color:#a5a2a4;font-size:6px;line-height:6px">ˇ</div>
<div class="abs" style="left:514.5px;top:186px;width:1px;height:15px;background:#e3e1e2"></div>
<div class="rt" style="left:518px;top:187.5px;font-size:12.5px;color:#a5a2a4;"><span class="sx" style="transform:scaleX(0.9588)">A</span></div>
<svg class="abs" style="left:524.5px;top:193px" width="6" height="6" viewBox="0 0 6 6"><path d="M.8 5.2L4.2 .8L5.4 2L2 5.4z" fill="none" stroke="#a5a2a4" stroke-width=".8"/></svg>
<div class="rt" style="left:335px;top:208.5px;font-size:10.5px;color:#6f6c6e;font-weight:bold;"><span class="sx" style="transform:scaleX(1.0000)">Ж</span></div>
<div class="rt" style="left:354.5px;top:208.5px;color:#8a8789;font-style:italic;font-size:10.5px"><span class="sx" style="transform:scaleX(0.9673)">К</span></div>
<div class="rt" style="left:371px;top:208.5px;color:#8a8789;font-size:10.5px;text-decoration:underline"><span class="sx" style="transform:scaleX(1.0000)">Ч</span></div>
<div class="rt" style="left:388.7px;top:208.5px;font-size:10.5px;color:#8a8789;"><span class="sx" style="transform:scaleX(0.8552)">S</span></div>
<div class="rt" style="left:404.5px;top:209.5px;color:#a5a2a4;font-size:8px;text-decoration:line-through"><span class="sx" style="transform:scaleX(0.7748)">abc</span></div>
<div class="rt" style="left:421px;top:207px;font-size:9.5px;color:#a5a2a4;"><span class="sx" style="transform:scaleX(1.0026)">AV</span></div>
<div class="abs" style="left:421.5px;top:219.5px;width:11px;height:1px;background:#a5a2a4"></div>
<svg class="abs" style="left:435.5px;top:213.5px" width="5" height="3.5" viewBox="0 0 5 3.5"><path d="M.5 .6 L2.5 2.7 L4.5 .6" fill="none" stroke="#a5a2a4" stroke-width=".9"/></svg>
<div class="rt" style="left:450px;top:208.5px;font-size:10.5px;color:#a5a2a4;"><span class="sx" style="transform:scaleX(0.9343)">Aa</span></div>
<svg class="abs" style="left:464.5px;top:213.5px" width="5" height="3.5" viewBox="0 0 5 3.5"><path d="M.5 .6 L2.5 2.7 L4.5 .6" fill="none" stroke="#a5a2a4" stroke-width=".9"/></svg>
<div class="abs" style="left:475px;top:207px;width:1px;height:15px;background:#e3e1e2"></div>
<svg class="abs" style="left:480px;top:208px" width="12" height="12" viewBox="0 0 12 12"><path d="M2.5 7.8L8.2 1.2L10.2 3L4.4 9.4L2 9.8z" fill="none" stroke="#a5a2a4" stroke-width=".9"/><rect x=".6" y="10.4" width="10.8" height="1.5" fill="#cfcccd"/></svg>
<svg class="abs" style="left:496.0px;top:213.5px" width="5" height="3.5" viewBox="0 0 5 3.5"><path d="M.5 .6 L2.5 2.7 L4.5 .6" fill="none" stroke="#a5a2a4" stroke-width=".9"/></svg>
<div class="rt" style="left:509px;top:207.5px;font-size:11.5px;color:#a5a2a4;"><span class="sx" style="transform:scaleX(1.1079)">A</span></div>
<div class="abs" style="left:507.5px;top:218.5px;width:11.5px;height:1.6px;background:#cfcccd"></div>
<svg class="abs" style="left:523.0px;top:213.5px" width="5" height="3.5" viewBox="0 0 5 3.5"><path d="M.5 .6 L2.5 2.7 L4.5 .6" fill="none" stroke="#a5a2a4" stroke-width=".9"/></svg>
<div class="rl" style="left:414.5px;top:233px"><span class="sx" style="transform:scaleX(0.7687)">Шрифт</span></div>
<svg class="abs" style="left:529px;top:236px" width="5" height="5" viewBox="0 0 5 5"><path d="M.4 4.6V.4H4.6" fill="none" stroke="#8a8a8a" stroke-width=".8"/><path d="M2 2 L4.6 4.6 M4.6 2.8V4.6H2.8" fill="none" stroke="#8a8a8a" stroke-width=".8"/></svg>
<svg class="abs" style="left:545px;top:187.5px" width="12" height="11" viewBox="0 0 12 11"><circle cx="1.1" cy="1.5" r=".9" fill="#a5a2a4"/><path d="M3.6 1.5H11" stroke="#a5a2a4" stroke-width="1"/><circle cx="1.1" cy="5.5" r=".9" fill="#a5a2a4"/><path d="M3.6 5.5H11" stroke="#a5a2a4" stroke-width="1"/><circle cx="1.1" cy="9.5" r=".9" fill="#a5a2a4"/><path d="M3.6 9.5H11" stroke="#a5a2a4" stroke-width="1"/></svg>
<svg class="abs" style="left:560.5px;top:192.0px" width="5" height="3.5" viewBox="0 0 5 3.5"><path d="M.5 .6 L2.5 2.7 L4.5 .6" fill="none" stroke="#a5a2a4" stroke-width=".9"/></svg>
<svg class="abs" style="left:573px;top:187.5px" width="12" height="11" viewBox="0 0 12 11"><path d="M1.1 0.30000000000000004V2.7" stroke="#a5a2a4" stroke-width=".8"/><path d="M3.6 1.5H11" stroke="#a5a2a4" stroke-width="1"/><path d="M1.1 4.3V6.7" stroke="#a5a2a4" stroke-width=".8"/><path d="M3.6 5.5H11" stroke="#a5a2a4" stroke-width="1"/><path d="M1.1 8.3V10.7" stroke="#a5a2a4" stroke-width=".8"/><path d="M3.6 9.5H11" stroke="#a5a2a4" stroke-width="1"/></svg>
<svg class="abs" style="left:588.5px;top:192.0px" width="5" height="3.5" viewBox="0 0 5 3.5"><path d="M.5 .6 L2.5 2.7 L4.5 .6" fill="none" stroke="#a5a2a4" stroke-width=".9"/></svg>
<svg class="abs" style="left:601px;top:187.5px" width="12" height="11" viewBox="0 0 12 11"><path d="M0.5 1H10.5M4.8 4H10.5M4.8 7H10.5M0.5 10H10.5" stroke="#a5a2a4" stroke-width="1"/><path d="M3 3.8L.8 5.5L3 7.2" fill="none" stroke="#a5a2a4" stroke-width=".8"/></svg>
<svg class="abs" style="left:618.7px;top:187.5px" width="12" height="11" viewBox="0 0 12 11"><path d="M0.5 1H10.5M4.8 4H10.5M4.8 7H10.5M0.5 10H10.5" stroke="#a5a2a4" stroke-width="1"/><path d="M.8 3.8L3 5.5L.8 7.2" fill="none" stroke="#a5a2a4" stroke-width=".8"/></svg>
<svg class="abs" style="left:635.5px;top:187.5px" width="12" height="11" viewBox="0 0 12 11"><path d="M4.4 1.5H11.4M4.4 5.5H11.4M4.4 9.5H11.4" stroke="#a5a2a4" stroke-width="1"/><path d="M1.6 .8V10.2M.2 2.4L1.6 .8L3 2.4M.2 8.6L1.6 10.2L3 8.6" fill="none" stroke="#a5a2a4" stroke-width=".8"/></svg>
<svg class="abs" style="left:650.0px;top:192.0px" width="5" height="3.5" viewBox="0 0 5 3.5"><path d="M.5 .6 L2.5 2.7 L4.5 .6" fill="none" stroke="#a5a2a4" stroke-width=".9"/></svg>
<svg class="abs" style="left:545px;top:209.0px" width="12" height="11" viewBox="0 0 12 11"><path d="M.3 1H10.7M.3 4H7M.3 7H10.7M.3 10H7" stroke="#8f8c8e" stroke-width="1"/></svg>
<svg class="abs" style="left:563px;top:209.0px" width="12" height="11" viewBox="0 0 12 11"><path d="M.3 1H10.7M2 4H9M.3 7H10.7M2 10H9" stroke="#8f8c8e" stroke-width="1"/></svg>
<svg class="abs" style="left:580.5px;top:209.0px" width="12" height="11" viewBox="0 0 12 11"><path d="M.3 1H10.7M4 4H10.7M.3 7H10.7M4 10H10.7" stroke="#8f8c8e" stroke-width="1"/></svg>
<svg class="abs" style="left:598px;top:209.0px" width="12" height="11" viewBox="0 0 12 11"><path d="M.3 1H10.7M.3 4H10.7M.3 7H10.7M.3 10H10.7" stroke="#8f8c8e" stroke-width="1"/></svg>
<div class="abs" style="left:612.5px;top:207px;width:1px;height:15px;background:#e3e1e2"></div>
<svg class="abs" style="left:617px;top:209.0px" width="12" height="11" viewBox="0 0 12 11"><path d="M.3 2.5H4.6M.3 5.5H4.6M.3 8.5H4.6M6.4 2.5H10.7M6.4 5.5H10.7M6.4 8.5H10.7" stroke="#a5a2a4" stroke-width="1"/></svg>
<svg class="abs" style="left:631.0px;top:213.5px" width="5" height="3.5" viewBox="0 0 5 3.5"><path d="M.5 .6 L2.5 2.7 L4.5 .6" fill="none" stroke="#a5a2a4" stroke-width=".9"/></svg>
<svg class="abs" style="left:665px;top:182px" width="11" height="12" viewBox="0 0 11 12"><path d="M2.4 .8V11M.6 8.8L2.4 11L4.2 8.8" fill="none" stroke="#a5a2a4" stroke-width=".9"/><path d="M6 4.6L7.6 .8L9.2 4.6M6.5 3.4H8.7" fill="none" stroke="#a5a2a4" stroke-width=".7"/><path d="M6 7H9.2L6 10.6H9.2" fill="none" stroke="#a5a2a4" stroke-width=".7"/></svg>
<svg class="abs" style="left:679.0px;top:186.5px" width="5" height="3.5" viewBox="0 0 5 3.5"><path d="M.5 .6 L2.5 2.7 L4.5 .6" fill="none" stroke="#a5a2a4" stroke-width=".9"/></svg>
<svg class="abs" style="left:665px;top:199.5px" width="11" height="11" viewBox="0 0 11 11"><rect x=".6" y="1.4" width="9.8" height="8.2" fill="none" stroke="#a5a2a4" stroke-width=".9"/><path d="M5.5 0V11M3 4H8M3 7H8" stroke="#a5a2a4" stroke-width=".8"/></svg>
<svg class="abs" style="left:679.0px;top:204.0px" width="5" height="3.5" viewBox="0 0 5 3.5"><path d="M.5 .6 L2.5 2.7 L4.5 .6" fill="none" stroke="#a5a2a4" stroke-width=".9"/></svg>
<svg class="abs" style="left:665px;top:216.5px" width="11.5" height="11.5" viewBox="0 0 11.5 11.5"><path d="M.5 1H6M.5 3.5H5" stroke="#a5a2a4" stroke-width=".9"/><rect x="3" y="4.6" width="4.6" height="3" fill="#d4d1d3"/><rect x="5.4" y="7" width="5.2" height="3.8" fill="#c3c0c2"/></svg>
<svg class="abs" style="left:679.0px;top:221.5px" width="5" height="3.5" viewBox="0 0 5 3.5"><path d="M.5 .6 L2.5 2.7 L4.5 .6" fill="none" stroke="#a5a2a4" stroke-width=".9"/></svg>
<div class="rl" style="left:600px;top:233px"><span class="sx" style="transform:scaleX(0.7963)">Абзац</span></div>
<svg class="abs" style="left:686px;top:236px" width="5" height="5" viewBox="0 0 5 5"><path d="M.4 4.6V.4H4.6" fill="none" stroke="#8a8a8a" stroke-width=".8"/><path d="M2 2 L4.6 4.6 M4.6 2.8V4.6H2.8" fill="none" stroke="#8a8a8a" stroke-width=".8"/></svg>
<svg class="abs" style="left:704.5px;top:182px" width="21" height="21" viewBox="0 0 21 21"><rect x=".8" y=".8" width="13" height="12.4" fill="#5b9bf0" stroke="#3a74c9" stroke-width="1"/><circle cx="14" cy="14" r="6.2" fill="#fff" stroke="#3b3b3b" stroke-width="1.1"/></svg>
<div class="rt" style="left:700.7px;top:204.5px;font-size:10.3px;color:#2b2b2b;"><span class="sx" style="transform:scaleX(0.8254)">Фигуры</span></div>
<svg class="abs" style="left:713.0px;top:219.5px" width="5" height="3.5" viewBox="0 0 5 3.5"><path d="M.5 .6 L2.5 2.7 L4.5 .6" fill="none" stroke="#444" stroke-width=".9"/></svg>
<svg class="abs" style="left:749px;top:182.5px" width="21" height="21" viewBox="0 0 21 21"><rect x="6.6" y="4.6" width="10.4" height="10.4" fill="#f8d48a" stroke="#dfa23e" stroke-width="1.1"/><rect x=".7" y=".7" width="6.6" height="6.6" fill="#fff" stroke="#555" stroke-width="1"/><rect x="12.4" y="12" width="7.4" height="7.4" fill="#fff" stroke="#555" stroke-width="1"/></svg>
<div class="rt" style="left:734.5px;top:204.5px;font-size:10.3px;color:#2b2b2b;"><span class="sx" style="transform:scaleX(0.8029)">Упорядочить</span></div>
<svg class="abs" style="left:757.0px;top:219.5px" width="5" height="3.5" viewBox="0 0 5 3.5"><path d="M.5 .6 L2.5 2.7 L4.5 .6" fill="none" stroke="#444" stroke-width=".9"/></svg>
<svg class="abs" style="left:797.5px;top:182.5px" width="21" height="21" viewBox="0 0 21 21"><rect x=".8" y=".8" width="17.6" height="17.6" fill="#f1f0f1" stroke="#c6c3c5" stroke-width="1.1" rx="1"/><path d="M7.5 18.4C10 17.8 16 12 19.8 7.6L20.6 9C18 13.6 12 19.6 9 20.4z" fill="#dad8d9" stroke="#bdbabc" stroke-width=".7"/></svg>
<div class="rt" style="left:788.7px;top:204.5px;font-size:10.3px;color:#c6c3c5;"><span class="sx" style="transform:scaleX(0.7572)">Экспресс-</span></div>
<div class="rt" style="left:792.5px;top:215.3px;font-size:10.3px;color:#c6c3c5;"><span class="sx" style="transform:scaleX(0.7667)">стили</span></div>
<svg class="abs" style="left:816.5px;top:220.5px" width="5" height="3.5" viewBox="0 0 5 3.5"><path d="M.5 .6 L2.5 2.7 L4.5 .6" fill="none" stroke="#c6c3c5" stroke-width=".9"/></svg>
<svg class="abs" style="left:832px;top:182.5px" width="11" height="11" viewBox="0 0 11 11"><path d="M5 .8L9.4 5.2L5.4 8.4L1.6 4.6z" fill="none" stroke="#c6c3c5" stroke-width=".9"/><rect x=".4" y="9.2" width="10.2" height="1.6" fill="#d3d0d2"/></svg>
<div class="rt" style="left:845.5px;top:181.5px;font-size:10.3px;color:#c6c3c5;"><span class="sx" style="transform:scaleX(0.7693)">Заливка фигуры</span></div>
<svg class="abs" style="left:908.0px;top:186.5px" width="5" height="3.5" viewBox="0 0 5 3.5"><path d="M.5 .6 L2.5 2.7 L4.5 .6" fill="none" stroke="#c6c3c5" stroke-width=".9"/></svg>
<svg class="abs" style="left:832px;top:200px" width="11" height="11" viewBox="0 0 11 11"><rect x=".6" y=".6" width="8.4" height="6.6" fill="none" stroke="#c6c3c5" stroke-width=".9"/><path d="M4 6.4L9.6 .8L10.6 1.8L5 7.4z" fill="#e2e0e1" stroke="#c6c3c5" stroke-width=".6"/><rect x=".4" y="9.2" width="10.2" height="1.6" fill="#d3d0d2"/></svg>
<div class="rt" style="left:845.5px;top:199.7px;font-size:10.3px;color:#c6c3c5;"><span class="sx" style="transform:scaleX(0.7915)">Контур фигуры</span></div>
<svg class="abs" style="left:905.0px;top:204.5px" width="5" height="3.5" viewBox="0 0 5 3.5"><path d="M.5 .6 L2.5 2.7 L4.5 .6" fill="none" stroke="#c6c3c5" stroke-width=".9"/></svg>
<svg class="abs" style="left:832px;top:217.5px" width="11.5" height="10.5" viewBox="0 0 11.5 10.5"><path d="M3.2 1.2H10.6L8.6 6H1.2z" fill="#e6e4e5" stroke="#c6c3c5" stroke-width=".9"/><path d="M1.2 6V8.6H8.6L10.6 3.8" fill="none" stroke="#c6c3c5" stroke-width=".9"/></svg>
<div class="rt" style="left:845.5px;top:216.5px;font-size:10.3px;color:#c6c3c5;"><span class="sx" style="transform:scaleX(0.7400)">Эффекты фигуры</span></div>
<svg class="abs" style="left:911.0px;top:221.5px" width="5" height="3.5" viewBox="0 0 5 3.5"><path d="M.5 .6 L2.5 2.7 L4.5 .6" fill="none" stroke="#c6c3c5" stroke-width=".9"/></svg>
<div class="rl" style="left:788px;top:233px"><span class="sx" style="transform:scaleX(0.7872)">Рисование</span></div>
<svg class="abs" style="left:921px;top:236px" width="5" height="5" viewBox="0 0 5 5"><path d="M.4 4.6V.4H4.6" fill="none" stroke="#8a8a8a" stroke-width=".8"/><path d="M2 2 L4.6 4.6 M4.6 2.8V4.6H2.8" fill="none" stroke="#8a8a8a" stroke-width=".8"/></svg>
<svg class="abs" style="left:937px;top:182px" width="11" height="11" viewBox="0 0 11 11"><circle cx="6.6" cy="4.2" r="3.5" fill="none" stroke="#444" stroke-width="1"/><path d="M4.2 6.8L.8 10.3" stroke="#444" stroke-width="1.2"/></svg>
<div class="rt" style="left:950.5px;top:181.5px;font-size:10.3px;color:#2b2b2b;"><span class="sx" style="transform:scaleX(0.7656)">Найти</span></div>
<svg class="abs" style="left:936.5px;top:199.5px" width="11.5" height="12" viewBox="0 0 11.5 12"><text x="4.6" y="5" font-size="5.6" font-family="Liberation Sans" fill="#8a3ab0">b</text><text x="6.4" y="11.4" font-size="6" font-family="Liberation Sans" fill="#2a78c8">c</text><path d="M3.6 1.6C1.4 2.6 .6 5.4 2 7.4M.8 6.6L2.1 7.6L3.2 6.2" fill="none" stroke="#2a78c8" stroke-width=".8"/><path d="M1.6 9.6L3.6 10.8" stroke="#2a78c8" stroke-width=".8"/></svg>
<div class="rt" style="left:950.5px;top:199.7px;font-size:10.3px;color:#2b2b2b;"><span class="sx" style="transform:scaleX(0.7670)">Заменить</span></div>
<svg class="abs" style="left:998.5px;top:204.5px" width="5" height="3.5" viewBox="0 0 5 3.5"><path d="M.5 .6 L2.5 2.7 L4.5 .6" fill="none" stroke="#444" stroke-width=".9"/></svg>
<svg class="abs" style="left:938.5px;top:216.5px" width="9" height="12" viewBox="0 0 9 12"><path d="M.8 .8V9.6L3 7.6L4.6 11L6 10.4L4.4 7.2H7.4z" fill="#fff" stroke="#333" stroke-width=".9" stroke-linejoin="round"/></svg>
<div class="rt" style="left:950.5px;top:216.5px;font-size:10.3px;color:#2b2b2b;"><span class="sx" style="transform:scaleX(0.7471)">Выделить</span></div>
<svg class="abs" style="left:989.0px;top:221.5px" width="5" height="3.5" viewBox="0 0 5 3.5"><path d="M.5 .6 L2.5 2.7 L4.5 .6" fill="none" stroke="#444" stroke-width=".9"/></svg>
<div class="rl" style="left:944.5px;top:233px"><span class="sx" style="transform:scaleX(0.8106)">Редактирование</span></div>
<svg class="abs" style="left:1035px;top:182.5px" width="20" height="20" viewBox="0 0 20 20"><rect x=".7" y=".7" width="18.6" height="18.6" fill="#fdf1ec" stroke="#d9714e" stroke-width="1.1"/><rect x="3.2" y="3.2" width="5.6" height="5.6" fill="#fff" stroke="#d9714e" stroke-width=".9"/><rect x="11.2" y="3.2" width="5.6" height="5.6" fill="#fff" stroke="#d9714e" stroke-width=".9"/><rect x="3.2" y="11.2" width="5.6" height="5.6" fill="#fff" stroke="#d9714e" stroke-width=".9"/><rect x="11.2" y="11.2" width="5.6" height="5.6" fill="#fff" stroke="#d9714e" stroke-width=".9"/></svg>
<div class="rt" style="left:1022.3px;top:204.3px;font-size:10.3px;color:#2b2b2b;"><span class="sx" style="transform:scaleX(0.7912)">Надстройки</span></div>
<div class="rl" style="left:1025px;top:233px"><span class="sx" style="transform:scaleX(0.8212)">Надстройки</span></div>
<svg class="abs" style="left:1143.5px;top:232.5px" width="8" height="5" viewBox="0 0 8 5"><path d="M.7 .8L4 4L7.3 .8" fill="none" stroke="#444" stroke-width="1"/></svg>
<!--/PPT-->
</div></div>

<!-- ZOOM TOOLBAR -->
<div id="zbar" class="abs"></div>
<!--ZB-->
<svg class="abs" style="left:33px;top:638px" width="22" height="22" viewBox="0 0 22 22"><rect x="8.2" y="1.6" width="5.6" height="10.4" rx="2.8" fill="none" stroke="#f2f2f2" stroke-width="1.3"/><path d="M5.4 9.6A5.6 5.6 0 0 0 16.6 9.6" fill="none" stroke="#f2f2f2" stroke-width="1.3" stroke-linecap="round"/><path d="M11 15.4V19.6M8.2 20H13.8" stroke="#f2f2f2" stroke-width="1.3" stroke-linecap="round"/><path d="M1.5 20.5L20.7 2" stroke="#e8305a" stroke-width="1.7" stroke-linecap="round"/></svg>
<svg class="abs" style="left:66.5px;top:647.5px" width="7" height="5" viewBox="0 0 7 5"><path d="M.8 4L3.5 1.2L6.2 4" fill="none" stroke="#f0f0f0" stroke-width="1.3" stroke-linecap="round" stroke-linejoin="round"/></svg>
<div class="abs" style="left:33.7px;top:662.5px;color:#fff;font-size:11.3px;font-weight:bold;line-height:13px;white-space:nowrap"><span class="sx" style="transform:scaleX(0.8097)">Звук</span></div>
<svg class="abs" style="left:110.5px;top:643.5px" width="21" height="12" viewBox="0 0 21 12"><rect x=".8" y=".8" width="13.6" height="10.4" rx="2.6" fill="none" stroke="#f2f2f2" stroke-width="1.3"/><path d="M16.4 4.2L20 2V10L16.4 7.8z" fill="none" stroke="#f2f2f2" stroke-width="1.2" stroke-linejoin="round"/></svg>
<svg class="abs" style="left:148.5px;top:647.5px" width="7" height="5" viewBox="0 0 7 5"><path d="M.8 4L3.5 1.2L6.2 4" fill="none" stroke="#f0f0f0" stroke-width="1.3" stroke-linecap="round" stroke-linejoin="round"/></svg>
<div class="abs" style="left:107px;top:662.5px;color:#fff;font-size:11.3px;font-weight:bold;line-height:13px;white-space:nowrap"><span class="sx" style="transform:scaleX(0.8176)">Видео</span></div>
<svg class="abs" style="left:365.5px;top:642px" width="17" height="15" viewBox="0 0 17 15"><circle cx="5.4" cy="3.8" r="2.7" fill="none" stroke="#f2f2f2" stroke-width="1.25"/><path d="M.8 14.2V11.6A3.6 3.6 0 0 1 4.4 8H6.4A3.6 3.6 0 0 1 10 11.6V14.2z" fill="none" stroke="#f2f2f2" stroke-width="1.25" stroke-linejoin="round"/><circle cx="12.2" cy="5.6" r="2" fill="none" stroke="#f2f2f2" stroke-width="1.2"/><path d="M11 9H13A3 3 0 0 1 16 12V14.2H10" fill="none" stroke="#f2f2f2" stroke-width="1.2" stroke-linejoin="round"/></svg>
<div class="abs" style="left:388px;top:643px;color:#a8a8a8;font-size:9.5px;line-height:10px">8</div>
<svg class="abs" style="left:414.5px;top:647.5px" width="7" height="5" viewBox="0 0 7 5"><path d="M.8 4L3.5 1.2L6.2 4" fill="none" stroke="#f0f0f0" stroke-width="1.3" stroke-linecap="round" stroke-linejoin="round"/></svg>
<div class="abs" style="left:349.5px;top:662.5px;color:#fff;font-size:11.3px;font-weight:bold;line-height:13px;white-space:nowrap"><span class="sx" style="transform:scaleX(0.8353)">Участники</span></div>
<svg class="abs" style="left:455.5px;top:642.5px" width="17" height="16" viewBox="0 0 17 16"><path d="M4.6 1.8H12.8A2.6 2.6 0 0 1 15.4 4.4V8" fill="none" stroke="#f2f2f2" stroke-width="1.2"/><path d="M3.4 4.2H10.6A2.6 2.6 0 0 1 13.2 6.8V10.4A2.6 2.6 0 0 1 10.6 13H7.2L4.4 15.2V13H3.4A2.6 2.6 0 0 1 .8 10.4V6.8A2.6 2.6 0 0 1 3.4 4.2z" fill="#000" stroke="#f2f2f2" stroke-width="1.25" stroke-linejoin="round"/><circle cx="4.3" cy="8.6" r=".85" fill="#f2f2f2"/><circle cx="7" cy="8.6" r=".85" fill="#f2f2f2"/><circle cx="9.7" cy="8.6" r=".85" fill="#f2f2f2"/></svg>
<div class="abs" style="left:470px;top:637.5px;width:12px;height:12px;border-radius:50%;background:#e8333f;color:#fff;font-size:8.5px;font-weight:bold;line-height:12px;text-align:center">1</div>
<svg class="abs" style="left:489.5px;top:647.5px" width="7" height="5" viewBox="0 0 7 5"><path d="M.8 4L3.5 1.2L6.2 4" fill="none" stroke="#f0f0f0" stroke-width="1.3" stroke-linecap="round" stroke-linejoin="round"/></svg>
<div class="abs" style="left:458px;top:662.5px;color:#fff;font-size:11.3px;font-weight:bold;line-height:13px;white-space:nowrap"><span class="sx" style="transform:scaleX(0.7943)">Чат</span></div>
<svg class="abs" style="left:534.5px;top:641.5px" width="22" height="17" viewBox="0 0 22 17"><path d="M11 15.6C6 12.2 1 8.8 1.2 5A4.3 4.3 0 0 1 5.6 1C8 1 9.8 2.4 11 4.4C12.2 2.4 14 1 16.4 1A4.3 4.3 0 0 1 20.8 5C21 8.8 16 12.2 11 15.6z" fill="none" stroke="#f2f2f2" stroke-width="1.3" stroke-linejoin="round"/></svg>
<svg class="abs" style="left:573.5px;top:647.5px" width="7" height="5" viewBox="0 0 7 5"><path d="M.8 4L3.5 1.2L6.2 4" fill="none" stroke="#f0f0f0" stroke-width="1.3" stroke-linecap="round" stroke-linejoin="round"/></svg>
<div class="abs" style="left:510.5px;top:662.5px;color:#fff;font-size:11.3px;font-weight:bold;line-height:13px;white-space:nowrap"><span class="sx" style="transform:scaleX(0.8196)">Отреагировать</span></div>
<div class="abs" style="left:618px;top:641px;width:20.5px;height:16.5px;background:#23d96c;border-radius:3.5px"></div>
<svg class="abs" style="left:622.5px;top:644px" width="11" height="11" viewBox="0 0 11 11"><path d="M5.5 9.6V2.4M2 5.4L5.5 1.6L9 5.4" fill="none" stroke="#000" stroke-width="1.9" stroke-linejoin="round" stroke-linecap="round"/></svg>
<svg class="abs" style="left:654.5px;top:647.5px" width="7" height="5" viewBox="0 0 7 5"><path d="M.8 4L3.5 1.2L6.2 4" fill="none" stroke="#f0f0f0" stroke-width="1.3" stroke-linecap="round" stroke-linejoin="round"/></svg>
<div class="abs" style="left:600.7px;top:662.5px;color:#fff;font-size:11.3px;font-weight:bold;line-height:13px;white-space:nowrap"><span class="sx" style="transform:scaleX(0.8081)">Поделиться</span></div>
<svg class="abs" style="left:733.5px;top:641.5px" width="16" height="17" viewBox="0 0 16 17"><path d="M8 .9C5.8 2.3 3.6 2.9 1 3.1V8C1 12 3.8 14.8 8 16.2C12.2 14.8 15 12 15 8V3.1C12.4 2.9 10.2 2.3 8 .9z" fill="none" stroke="#f2f2f2" stroke-width="1.2" stroke-linejoin="round"/><path d="M8 3.4C9.4 4.2 10.8 4.6 12.6 4.9V8H8zM8 8V13.6C5.4 12.6 3.4 10.8 3.4 8z" fill="#f2f2f2"/></svg>
<div class="abs" style="left:676px;top:662.5px;color:#fff;font-size:11.3px;font-weight:bold;line-height:13px;white-space:nowrap"><span class="sx" style="transform:scaleX(0.8441)">Инструменты организатора</span></div>
<svg class="abs" style="left:842px;top:641px" width="19" height="17.5" viewBox="0 0 19 17.5"><path d="M1 6.4V4A3 3 0 0 1 4 1H7" fill="none" stroke="#f2f2f2" stroke-width="1.3" stroke-linecap="round"/><circle cx="14" cy="4.4" r="3.2" fill="none" stroke="#f2f2f2" stroke-width="1.3"/><circle cx="4.4" cy="13" r="3.2" fill="none" stroke="#f2f2f2" stroke-width="1.3"/><path d="M17.6 11V13.4A3 3 0 0 1 14.6 16.4H11.6" fill="none" stroke="#f2f2f2" stroke-width="1.3" stroke-linecap="round"/></svg>
<svg class="abs" style="left:874.5px;top:647.5px" width="7" height="5" viewBox="0 0 7 5"><path d="M.8 4L3.5 1.2L6.2 4" fill="none" stroke="#f0f0f0" stroke-width="1.3" stroke-linecap="round" stroke-linejoin="round"/></svg>
<div class="abs" style="left:820.7px;top:662.5px;color:#fff;font-size:11.3px;font-weight:bold;line-height:13px;white-space:nowrap"><span class="sx" style="transform:scaleX(0.8683)">Приложения</span></div>
<svg class="abs" style="left:912px;top:639.5px" width="20" height="20" viewBox="0 0 20 20"><circle cx="10" cy="10" r="8.8" fill="none" stroke="#f2f2f2" stroke-width="1.4"/><circle cx="10" cy="10" r="3.9" fill="#f2f2f2"/></svg>
<div class="abs" style="left:905.5px;top:662.5px;color:#fff;font-size:11.3px;font-weight:bold;line-height:13px;white-space:nowrap"><span class="sx" style="transform:scaleX(0.8300)">Запись</span></div>
<svg class="abs" style="left:989px;top:639.5px" width="20" height="20" viewBox="0 0 20 20"><circle cx="10" cy="10" r="8.8" fill="none" stroke="#f2f2f2" stroke-width="1.4"/><circle cx="5.8" cy="10" r="1.05" fill="#f2f2f2"/><circle cx="10" cy="10" r="1.05" fill="#f2f2f2"/><circle cx="14.2" cy="10" r="1.05" fill="#f2f2f2"/></svg>
<div class="abs" style="left:962px;top:662.5px;color:#fff;font-size:11.3px;font-weight:bold;line-height:13px;white-space:nowrap"><span class="sx" style="transform:scaleX(0.8301)">Дополнительно</span></div>
<svg class="abs" style="left:1225px;top:638.5px" width="22" height="22" viewBox="0 0 22 22"><path d="M6 2.2H16L21 11L16 19.8H6L1 11z" fill="none" stroke="#e0244d" stroke-width="1.5" stroke-linejoin="round"/><path d="M8 8L14 14M14 8L8 14" stroke="#fff" stroke-width="2.4" stroke-linecap="round"/></svg>
<div class="abs" style="left:1207.7px;top:662.5px;color:#fff;font-size:11.3px;font-weight:bold;line-height:13px;white-space:nowrap"><span class="sx" style="transform:scaleX(0.8438)">Завершение</span></div>
<div class="abs" style="left:17px;top:589.5px;width:26px;height:26px;border-radius:50%;background:#26282b"></div>
<svg class="abs" style="left:23px;top:595px" width="14" height="15" viewBox="0 0 14 15"><path d="M2 9.6L9.4 2.2L11.8 4.6L4.4 12L1.6 12.6z" fill="none" stroke="#1fbf75" stroke-width="1.3" stroke-linejoin="round"/><path d="M8 3.8L10.2 6" stroke="#1fbf75" stroke-width="1"/><path d="M2 14H12.4" stroke="#1fbf75" stroke-width="1.3" stroke-linecap="round"/></svg>
<!--/ZB-->

<!-- TASKBAR -->
<div id="task" class="abs"></div>
<!--TB-->
<svg class="abs" style="left:16px;top:687.5px" width="21" height="22" viewBox="0 0 21 22"><circle cx="11" cy="2.6" r=".9" fill="#4aa3e8"/><circle cx="14.6" cy="1.6" r=".8" fill="#4aa3e8"/><circle cx="17.4" cy="4" r=".8" fill="#4aa3e8"/><circle cx="19" cy="7" r=".8" fill="#4aa3e8"/><circle cx="15.2" cy="4.8" r=".7" fill="#4aa3e8"/><path d="M.8 12.6C1.4 7.6 5.4 4.6 9.2 4.8C13 5 16.4 7.8 16.8 12.4C15.6 11.4 14 11.4 12.8 12.4C11.6 11.2 9.8 11.2 8.8 12.4C7.6 11.2 5.8 11.2 4.8 12.6C3.6 11.6 2 11.6 .8 12.6z" fill="#7ec4f5"/><path d="M.8 12.6C1.4 7.6 5.4 4.6 9.2 4.8C6.4 6.4 5 9.4 4.8 12.6C3.6 11.6 2 11.6 .8 12.6z" fill="#a9dbfb"/><path d="M8.8 12.4V18.6A1.9 1.9 0 0 1 5 18.6" fill="none" stroke="#8a97a5" stroke-width="1.3" stroke-linecap="round"/></svg>
<div class="abs" style="left:43px;top:687px;color:#fff;font-size:11.6px;line-height:13px;white-space:nowrap"><span class="sx" style="transform:scaleX(0.8584)">1 cm of rain</span></div>
<div class="abs" style="left:43px;top:700.2px;color:#c9d0d6;font-size:11.6px;line-height:13px;white-space:nowrap"><span class="sx" style="transform:scaleX(0.8422)">Thursday</span></div>
<svg class="abs" style="left:408px;top:690.5px" width="20" height="20" viewBox="0 0 20 20"><defs><linearGradient id="wg" x1="0" y1="0" x2="1" y2="1"><stop offset="0" stop-color="#6fd3ff"/><stop offset="1" stop-color="#0b8be0"/></linearGradient></defs><rect x="0" y="0" width="9.4" height="9.4" rx=".8" fill="url(#wg)"/><rect x="10.4" y="0" width="9.4" height="9.4" rx=".8" fill="url(#wg)"/><rect x="0" y="10.4" width="9.4" height="9.4" rx=".8" fill="url(#wg)"/><rect x="10.4" y="10.4" width="9.4" height="9.4" rx=".8" fill="url(#wg)"/></svg>
<div class="abs" style="left:440px;top:687.5px;width:182px;height:25px;border-radius:12.5px;background:#f4f4f5;overflow:hidden"><div class="abs" style="left:140px;top:-3px;width:46px;height:31px;filter:blur(1.4px);background:radial-gradient(ellipse 9px 8px at 16px 12px,#e8792b 0 70%,transparent 100%),radial-gradient(ellipse 9px 9px at 30px 11px,#f2a23a 0 70%,transparent 100%),radial-gradient(ellipse 6px 6px at 24px 7px,#f6c64f 0 70%,transparent 100%),radial-gradient(ellipse 12px 5px at 16px 24px,#8fae4a 0 70%,transparent 100%),radial-gradient(ellipse 10px 5px at 34px 23px,#c9d27a 0 70%,transparent 100%),linear-gradient(90deg,transparent 0,#f7ead2 30%,#f3dcae 100%)"></div><div class="abs" style="left:165px;top:8px;width:1.2px;height:13px;background:#6b4a2a;opacity:.7"></div><div class="abs" style="left:171px;top:6px;width:1.2px;height:15px;background:#6b4a2a;opacity:.6"></div><div class="abs" style="left:158px;top:10px;width:1.2px;height:11px;background:#f7f2e6;opacity:.9"></div></div>
<svg class="abs" style="left:449px;top:693.5px" width="13" height="13" viewBox="0 0 13 13"><circle cx="5.4" cy="5.4" r="4.1" fill="none" stroke="#3a3a3a" stroke-width="1.5"/><path d="M8.5 8.5L12 12" stroke="#3a3a3a" stroke-width="1.7" stroke-linecap="round"/></svg>
<div class="abs" style="left:470px;top:692.5px;color:#5c5c5c;font-size:12.6px;line-height:15px;white-space:nowrap"><span class="sx" style="transform:scaleX(0.9454)">Поиск</span></div>
<svg class="abs" style="left:632.5px;top:691.5px" width="21" height="18" viewBox="0 0 21 18"><path d="M.5 2.2A1.4 1.4 0 0 1 1.9 .8H7L9 2.8H19.1A1.4 1.4 0 0 1 20.5 4.2V16H.5z" fill="#f2b530"/><path d="M.5 5H20.5V16.2A1 1 0 0 1 19.5 17.2H1.5A1 1 0 0 1 .5 16.2z" fill="#ffd75e"/><rect x="6.8" y="13.4" width="7.4" height="3.8" fill="#1f78d1"/><rect x="5.6" y="12.2" width="9.8" height="1.8" fill="#3d95e6"/></svg>
<div class="abs" style="left:640px;top:713.3px;width:5px;height:2.2px;border-radius:1px;background:#9aa3ab"></div>
<svg class="abs" style="left:670px;top:691.5px" width="18" height="17" viewBox="0 0 18 17"><rect x="6" y=".6" width="11.4" height="15.8" rx="1" fill="#f4f6fa"/><path d="M8.4 3.4H15.4M8.4 6.2H15.4M8.4 9H15.4M8.4 11.8H15.4" stroke="#2b5fb3" stroke-width="1.3"/><rect x=".4" y="3.2" width="10" height="10.6" rx="1" fill="#2358ad"/><text x="1.7" y="11.6" font-family="Liberation Sans" font-weight="bold" font-size="8.4" fill="#fff">W</text></svg>
<div class="abs" style="left:699.5px;top:683.5px;width:33px;height:33px;border-radius:4px;background:#2c3a49"></div>
<div class="abs" style="left:705.8px;top:689.6px;width:20.4px;height:20.4px;border-radius:50%;background:#0e5ff0;color:#fff;font-size:5.6px;font-weight:bold;line-height:20.4px;text-align:center;letter-spacing:.1px">zoom</div>
<div class="abs" style="left:710px;top:713px;width:12.5px;height:2.6px;border-radius:1.3px;background:#55c2f7"></div>
<svg class="abs" style="left:740.5px;top:689.5px" width="22" height="22" viewBox="0 0 22 22"><path d="M11 2.6A8.2 8.2 0 0 0 3.9 14.9L2.6 19.6L7.4 18.3A8.2 8.2 0 1 0 11 2.6z" fill="none" stroke="#25d366" stroke-width="2" stroke-linejoin="round"/><path d="M7.6 7.2C8 6.4 8.9 6.6 9.1 7.2L9.7 8.6C9.8 9 9.3 9.4 9.1 9.8C9.7 11.2 10.9 12.4 12.5 13C12.9 12.6 13.3 12 13.7 12.2L15.3 13C15.7 13.2 15.5 14.2 14.7 14.8C13.5 15.6 10.9 14.6 9.5 13.2C7.9 11.6 6.8 9.2 7.6 7.2z" fill="#25d366"/></svg>
<div class="abs" style="left:753.5px;top:686px;width:13px;height:13px;border-radius:50%;background:#3ea6f2;color:#0b2238;font-size:9.5px;line-height:13px;text-align:center">4</div>
<div class="abs" style="left:750px;top:713.3px;width:5px;height:2.2px;border-radius:1px;background:#9aa3ab"></div>
<svg class="abs" style="left:778.5px;top:690.2px" width="21" height="21" viewBox="0 0 21 21"><circle cx="10.5" cy="10.5" r="10" fill="#fbc116"/><path d="M10.5 10.5L1.84 5.5A10 10 0 0 1 19.16 5.5z" fill="#e33b2e"/><path d="M10.5 10.5L1.84 5.5A10 10 0 0 0 10.5 20.5L15.2 12.6z" fill="#2ba24c"/><path d="M1.84 5.5H19.16A10 10 0 0 0 1.84 5.5z" fill="#e33b2e"/><circle cx="10.5" cy="10.5" r="4.7" fill="#fff"/><circle cx="10.5" cy="10.5" r="3.7" fill="#3b82f6"/></svg>
<div class="abs" style="left:791px;top:686px;width:12.5px;height:12.5px;border-radius:50%;background:radial-gradient(circle at 50% 45%,#b9a8a8 0 1.8px,#2b3a78 2.4px 4.4px,#6a78a8 5px);border:1.2px solid #d4d8e0"></div>
<div class="abs" style="left:787px;top:713.3px;width:5px;height:2.2px;border-radius:1px;background:#9aa3ab"></div>
<div class="abs" style="left:809.5px;top:683.5px;width:33px;height:33px;border-radius:4px;background:#7c4c59"></div>
<svg class="abs" style="left:815.5px;top:691px" width="20" height="20" viewBox="0 0 20 20"><circle cx="10" cy="10" r="9.7" fill="#2aa5e0"/><path d="M4 9.8L14.6 5.4C15.2 5.2 15.6 5.6 15.4 6.4L13.8 14.4C13.7 15 13.2 15.2 12.6 14.8L9.8 12.8L8.4 14.2C8.2 14.4 7.9 14.3 7.9 14L8 11.6L13 7.2L6.8 11L4.2 10.2C3.8 10.1 3.7 9.9 4 9.8z" fill="#fff"/></svg>
<div class="abs" style="left:827px;top:687px;width:15.5px;height:12.5px;border-radius:6px;background:#e8343f;color:#fff;font-size:8.6px;line-height:12.5px;text-align:center">96</div>
<div class="abs" style="left:813px;top:712.8px;width:26.5px;height:2.8px;border-radius:1.4px;background:#f2929f"></div>
<svg class="abs" style="left:851px;top:690.5px" width="21" height="22" viewBox="0 0 21 22"><path d="M10.4 1.4C5.6 1.4 2.2 3.6 2.2 9.2C2.2 12.8 3.5 15 5.6 16.2V20L8.6 17.2C9.2 17.3 9.8 17.3 10.4 17.3C15.2 17.3 18.6 14.8 18.6 9.2C18.6 3.6 15.2 1.4 10.4 1.4z" fill="#7b5be6" stroke="#e6defc" stroke-width="1.3" stroke-linejoin="round"/><path d="M7.2 5.6C7.8 5.2 8.2 5.6 8.6 6.4L9 7.4C9.2 7.9 8.6 8.2 8.4 8.6C8.8 10 10 11.2 11.6 11.8C12 11.4 12.4 10.9 12.9 11.2L14 12C14.5 12.4 14.2 13 13.6 13.6C12.4 14.4 10 13.4 8.6 12C7 10.4 6 7.4 7.2 5.6z" fill="#fff"/></svg>
<div class="abs" style="left:864px;top:685.5px;width:13px;height:14px;border-radius:4.5px;background:#f03a35;color:#fff;font-size:9px;line-height:13px;text-align:center">1</div>
<div class="abs" style="left:859.5px;top:713.3px;width:5px;height:2.2px;border-radius:1px;background:#9aa3ab"></div>
<svg class="abs" style="left:1013.5px;top:696px" width="11" height="7" viewBox="0 0 11 7"><path d="M1 5.8L5.5 1.4L10 5.8" fill="none" stroke="#fff" stroke-width="1.5" stroke-linecap="round" stroke-linejoin="round"/></svg>
<svg class="abs" style="left:1037.5px;top:692px" width="17" height="17" viewBox="0 0 17 17"><path d="M2.2 7.4A6.2 6.2 0 0 1 13 4" fill="none" stroke="#e8edf2" stroke-width="1.2"/><path d="M13.6 1V4.6H10" fill="none" stroke="#e8edf2" stroke-width="1.2"/><path d="M13.8 9.8A6.2 6.2 0 0 1 3 13" fill="none" stroke="#e8edf2" stroke-width="1.2"/><path d="M2.4 16V12.4H6" fill="none" stroke="#e8edf2" stroke-width="1.2"/><circle cx="11.6" cy="12.2" r="3.4" fill="#1f7ae0"/></svg>
<svg class="abs" style="left:1064px;top:692px" width="19" height="16" viewBox="0 0 19 16"><rect x="2.6" y=".8" width="3.2" height="6.4" rx="1.6" fill="#4ab6c9"/><path d="M.8 5.6A3.5 3.5 0 0 0 7.6 5.6M4.2 9.2V11.4" fill="none" stroke="#4ab6c9" stroke-width="1"/><path d="M9.4 9.6L17.6 6L14 14.4L12.8 10.8z" fill="none" stroke="#4ab6c9" stroke-width="1.1" stroke-linejoin="round"/></svg>
<div class="abs" style="left:1096px;top:693.5px;color:#fff;font-size:10.8px;line-height:13px;white-space:nowrap"><span class="sx" style="transform:scaleX(0.8546)">УКР</span></div>
<svg class="abs" style="left:1128px;top:693.5px" width="16" height="12" viewBox="0 0 16 12"><path d="M1 4.4A10 10 0 0 1 15 4.4" fill="none" stroke="#fff" stroke-width="1.3" stroke-linecap="round"/><path d="M3.4 7A6.6 6.6 0 0 1 12.6 7" fill="none" stroke="#fff" stroke-width="1.3" stroke-linecap="round"/><path d="M5.8 9.4A3.2 3.2 0 0 1 10.2 9.4" fill="none" stroke="#fff" stroke-width="1.3" stroke-linecap="round"/><circle cx="8" cy="11" r=".9" fill="#fff"/></svg>
<svg class="abs" style="left:1148px;top:693.5px" width="15" height="13" viewBox="0 0 15 13"><path d="M.8 4.4H3.4L6.8 1.4V11.6L3.4 8.6H.8z" fill="none" stroke="#fff" stroke-width="1.1" stroke-linejoin="round"/><path d="M9 4.2A3.2 3.2 0 0 1 9 8.8M10.8 2.2A6 6 0 0 1 10.8 10.8" fill="none" stroke="#fff" stroke-width="1.1" stroke-linecap="round"/></svg>
<svg class="abs" style="left:1169px;top:695px" width="15" height="10" viewBox="0 0 15 10"><rect x=".7" y=".9" width="11.6" height="8.2" rx="2" fill="none" stroke="#fff" stroke-width="1.2"/><rect x="2.4" y="2.7" width="4.4" height="4.6" rx=".6" fill="#fff"/><path d="M13.6 3.4V6.6" stroke="#fff" stroke-width="1.4" stroke-linecap="round"/></svg>
<div class="abs" style="left:1221px;top:686.5px;color:#fff;font-size:10.8px;line-height:13px;white-space:nowrap"><span class="sx" style="transform:scaleX(0.8361)">14:44</span></div>
<div class="abs" style="left:1196.8px;top:699.8px;color:#fff;font-size:10.8px;line-height:13px;white-space:nowrap"><span class="sx" style="transform:scaleX(0.8789)">17.11.2025</span></div>
<svg class="abs" style="left:1250.5px;top:692.5px" width="14" height="15" viewBox="0 0 14 15"><path d="M2.2 10.6C3.4 9.4 3.2 7.4 3.4 5.6A3.6 3.6 0 0 1 10.6 5.6C10.8 7.4 10.6 9.4 11.8 10.6z" fill="#e8edf2"/><path d="M5.4 12A1.7 1.7 0 0 0 8.6 12z" fill="#e8edf2"/><text x="8.2" y="6.2" font-family="Liberation Sans" font-size="5.2" font-weight="bold" fill="#e8edf2">z</text><text x="10.6" y="3.6" font-family="Liberation Sans" font-size="4" font-weight="bold" fill="#e8edf2">z</text></svg>
<!--/TB-->

</div>
</body>
</html>
